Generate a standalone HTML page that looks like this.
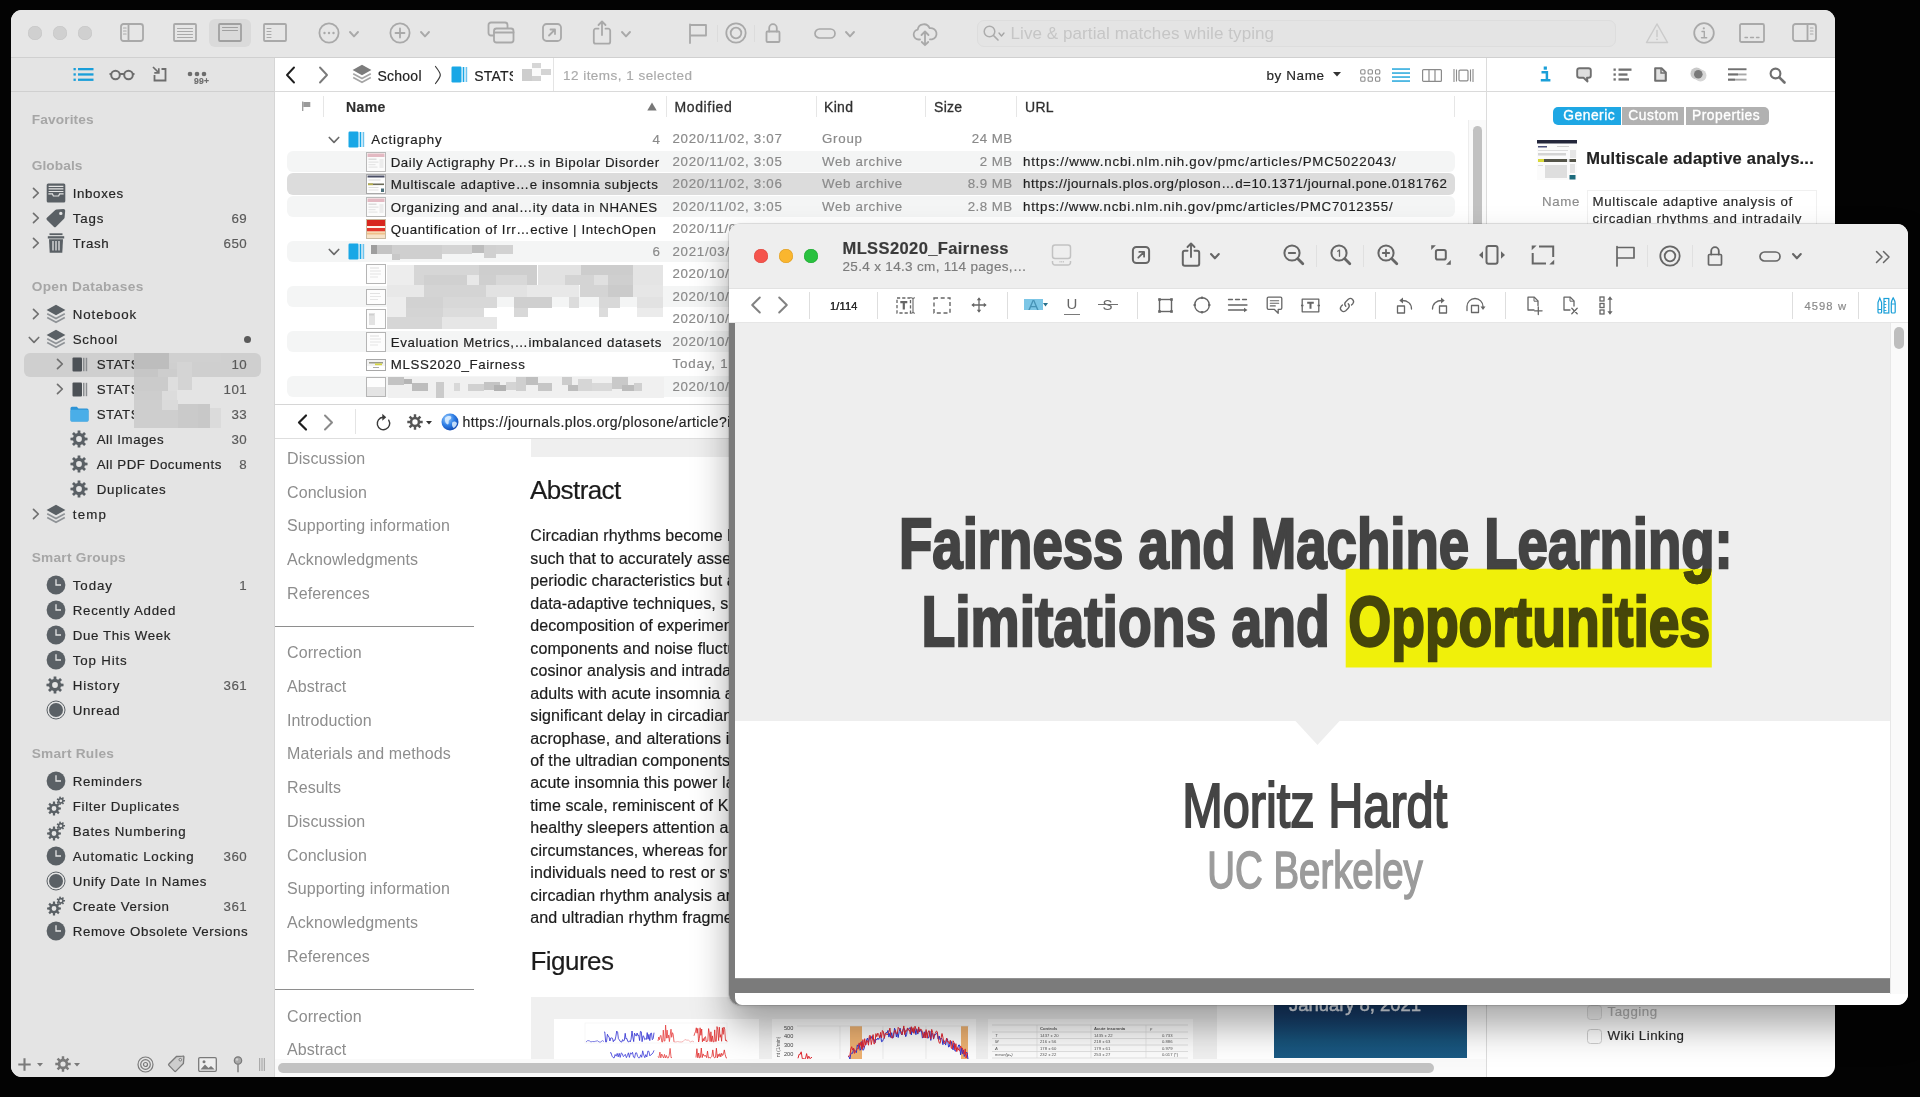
<!DOCTYPE html>
<html lang="en"><head><meta charset="utf-8"><title>DEVONthink - MLSS2020_Fairness</title>
<style>
*{box-sizing:border-box}
html,body{margin:0;padding:0}
body{width:1920px;height:1097px;background:#030303;position:relative;overflow:hidden;
 font-family:"Liberation Sans",sans-serif;font-size:13.5px;color:#262626}
div,span.t,svg{position:absolute}
svg{overflow:visible}
.t{white-space:nowrap;display:block}
#main>div,#frontin>div{will-change:transform}
.ui{font-size:13.3px;letter-spacing:.5px;color:#262626;-webkit-text-stroke:.18px}
.hd{font-size:13.7px;letter-spacing:.2px;font-weight:bold;color:#a6a6a6;-webkit-text-stroke:0}
.cnt{color:#5a5a5a}
.dim{color:#808080}
.web{font-size:16px;letter-spacing:.09px;color:#1c1c1c;-webkit-text-stroke:.2px}
.nav{font-size:16px;letter-spacing:.09px;color:#8d8d8d}
#main{left:11px;top:10px;width:1824px;height:1067px;border-radius:11px;overflow:hidden;background:#fff}
#front{left:729px;top:224px;width:1179px;height:780.5px;border-radius:11px;background:#fff;
 box-shadow:0 0 0 .5px rgba(0,0,0,.2),0 22px 36px rgba(0,0,0,.34),0 1px 4px rgba(0,0,0,.12)}
#frontin{left:0;top:0;width:1179px;height:780.5px;border-radius:11px;overflow:hidden}
</style></head>
<body>
<div id="main"><div style="left:-11px;top:-10px;width:1920px;height:1097px">
<div style="left:11px;top:10px;width:1824px;height:48px;background:#e6e6e6;border-bottom:1px solid #d0d0d0"></div>
<div style="left:27.7px;top:26.3px;width:14px;height:14px;border-radius:50%;background:#d0d0d0;box-shadow:inset 0 0 0 .5px #c6c6c6"></div>
<div style="left:52.7px;top:26.3px;width:14px;height:14px;border-radius:50%;background:#d0d0d0;box-shadow:inset 0 0 0 .5px #c6c6c6"></div>
<div style="left:77.6px;top:26.3px;width:14px;height:14px;border-radius:50%;background:#d0d0d0;box-shadow:inset 0 0 0 .5px #c6c6c6"></div>
<svg style="left:120px;top:23.1px;" width="24" height="19" viewBox="0 0 24 19"><rect x="1" y="1" width="22" height="17" rx="2.5" fill="none" stroke="#a9a9a9" stroke-width="1.8" stroke-linejoin="round" stroke-linecap="round"/><path d="M8.5 1v17" fill="none" stroke="#a9a9a9" stroke-width="1.8" stroke-linejoin="round" stroke-linecap="round"/><path d="M3.5 5h2.6M3.5 8h2.6M3.5 11h2.6" fill="none" stroke="#a9a9a9" stroke-width="1.1" stroke-linejoin="round" stroke-linecap="round"/></svg>
<svg style="left:173px;top:23.1px;" width="24" height="19" viewBox="0 0 24 19"><rect x="1" y="1" width="22" height="17" rx="1" fill="none" stroke="#a9a9a9" stroke-width="1.8" stroke-linejoin="round" stroke-linecap="round"/><path d="M4.5 5.5h15M4.5 8.5h15M4.5 11.5h15M4.5 14.5h15" fill="none" stroke="#a9a9a9" stroke-width="1.1" stroke-linejoin="round" stroke-linecap="round"/></svg>
<div style="left:209px;top:19px;width:42px;height:28px;background:#dadada;border-radius:6px"></div>
<svg style="left:218px;top:23.1px;" width="24" height="19" viewBox="0 0 24 19"><rect x="1" y="1" width="22" height="17" rx="1" fill="none" stroke="#a0a0a0" stroke-width="1.8" stroke-linejoin="round" stroke-linecap="round"/><path d="M4.5 4.5h15M4.5 7.5h15" fill="none" stroke="#a0a0a0" stroke-width="1.1" stroke-linejoin="round" stroke-linecap="round"/></svg>
<svg style="left:263px;top:23.1px;" width="24" height="19" viewBox="0 0 24 19"><rect x="1" y="1" width="22" height="17" rx="1" fill="none" stroke="#a9a9a9" stroke-width="1.8" stroke-linejoin="round" stroke-linecap="round"/><path d="M4 5.5h4M4 8.5h4M4 11.5h4M4 14.5h4" fill="none" stroke="#a9a9a9" stroke-width="1.1" stroke-linejoin="round" stroke-linecap="round"/></svg>
<svg style="left:318px;top:22.1px;" width="22" height="22" viewBox="0 0 22 22"><circle cx="11" cy="11" r="9.6" fill="none" stroke="#a9a9a9" stroke-width="1.8" stroke-linejoin="round" stroke-linecap="round"/><circle cx="6.5" cy="11" r="1.2" fill="#a9a9a9"/><circle cx="11" cy="11" r="1.2" fill="#a9a9a9"/><circle cx="15.5" cy="11" r="1.2" fill="#a9a9a9"/></svg>
<svg style="left:348.5px;top:30.8px;" width="10" height="6.4" viewBox="0 0 10 6.4"><path d="M1 1 L5 5.4 L9 1" fill="none" stroke="#a9a9a9" stroke-width="1.9" stroke-linecap="round" stroke-linejoin="round"/></svg>
<svg style="left:389px;top:22.1px;" width="22" height="22" viewBox="0 0 22 22"><circle cx="11" cy="11" r="9.6" fill="none" stroke="#a9a9a9" stroke-width="1.8" stroke-linejoin="round" stroke-linecap="round"/><path d="M6.5 11h9M11 6.5v9" fill="none" stroke="#a9a9a9" stroke-width="1.8" stroke-linejoin="round" stroke-linecap="round"/></svg>
<svg style="left:419.5px;top:30.8px;" width="10" height="6.4" viewBox="0 0 10 6.4"><path d="M1 1 L5 5.4 L9 1" fill="none" stroke="#a9a9a9" stroke-width="1.9" stroke-linecap="round" stroke-linejoin="round"/></svg>
<svg style="left:486.5px;top:21.1px;" width="28" height="23" viewBox="0 0 28 23"><rect x="1.5" y="1.5" width="19" height="13" rx="2.5" fill="none" stroke="#a9a9a9" stroke-width="1.8" stroke-linejoin="round" stroke-linecap="round"/><rect x="7" y="7.5" width="19.5" height="14" rx="2.5" fill="#e6e6e6" stroke="#a9a9a9" stroke-width="1.8" stroke-linejoin="round" stroke-linecap="round"/><path d="M7 11.5h19.5" fill="none" stroke="#a9a9a9" stroke-width="1.8" stroke-linejoin="round" stroke-linecap="round"/></svg>
<svg style="left:541.5px;top:23.1px;" width="20" height="19" viewBox="0 0 20 19"><rect x="1" y="1" width="18" height="17" rx="3.5" fill="none" stroke="#a9a9a9" stroke-width="1.8" stroke-linejoin="round" stroke-linecap="round"/><path d="M7 12.5l6-6M8.5 6.5h4.5v4.5" fill="none" stroke="#a9a9a9" stroke-width="1.8" stroke-linejoin="round" stroke-linecap="round"/></svg>
<svg style="left:590.7px;top:19.8px;" width="22" height="25" viewBox="0 0 22 25"><path d="M7.5 8.7H4.8a2 2 0 0 0-2 2v11a2 2 0 0 0 2 2h12.4a2 2 0 0 0 2-2v-11a2 2 0 0 0-2-2h-2.7" fill="none" stroke="#a9a9a9" stroke-width="1.8" stroke-linejoin="round" stroke-linecap="round"/><path d="M11 15V2M7.5 5L11 1.5 14.5 5" fill="none" stroke="#a9a9a9" stroke-width="1.8" stroke-linejoin="round" stroke-linecap="round"/></svg>
<svg style="left:620.5px;top:30.8px;" width="10" height="6.4" viewBox="0 0 10 6.4"><path d="M1 1 L5 5.4 L9 1" fill="none" stroke="#a9a9a9" stroke-width="1.9" stroke-linecap="round" stroke-linejoin="round"/></svg>
<svg style="left:688px;top:21.6px;" width="20" height="22" viewBox="0 0 20 22"><path d="M2 21V2.5M2 3h16v10.5H2" fill="none" stroke="#a9a9a9" stroke-width="1.8" stroke-linejoin="round" stroke-linecap="round"/></svg>
<div style="left:716.5px;top:25px;width:1px;height:17px;background:#dcdcdc"></div>
<svg style="left:724.5px;top:21.6px;" width="22" height="22" viewBox="0 0 22 22"><circle cx="11" cy="11" r="9.7" fill="none" stroke="#a9a9a9" stroke-width="1.8" stroke-linejoin="round" stroke-linecap="round"/><circle cx="11" cy="11" r="5.3" fill="none" stroke="#a9a9a9" stroke-width="1.8" stroke-linejoin="round" stroke-linecap="round"/></svg>
<div style="left:754px;top:25px;width:1px;height:17px;background:#dcdcdc"></div>
<svg style="left:764.5px;top:22.1px;" width="16" height="21" viewBox="0 0 16 21"><rect x="1.5" y="9.5" width="13" height="10.5" rx="1" fill="none" stroke="#a9a9a9" stroke-width="1.8" stroke-linejoin="round" stroke-linecap="round"/><path d="M4.2 9.5V6a3.8 3.8 0 0 1 7.6 0v3.5" fill="none" stroke="#a9a9a9" stroke-width="1.8" stroke-linejoin="round" stroke-linecap="round"/></svg>
<svg style="left:813.5px;top:28.1px;" width="22" height="11" viewBox="0 0 22 11"><rect x="1" y="1" width="20" height="9" rx="4.5" fill="none" stroke="#a9a9a9" stroke-width="1.7" stroke-linejoin="round" stroke-linecap="round"/></svg>
<svg style="left:845px;top:30.8px;" width="10" height="6.4" viewBox="0 0 10 6.4"><path d="M1 1 L5 5.4 L9 1" fill="none" stroke="#a9a9a9" stroke-width="1.9" stroke-linecap="round" stroke-linejoin="round"/></svg>
<svg style="left:911.5px;top:22.1px;" width="26" height="25" viewBox="0 0 26 25"><path d="M8 17.5H6.5a5 5 0 0 1-.8-9.9 6.2 6.2 0 0 1 11.9-1.4 5.7 5.7 0 0 1 2.4 11.2H18" fill="none" stroke="#a9a9a9" stroke-width="1.8" stroke-linejoin="round" stroke-linecap="round"/><path d="M13 10v13M9.5 13L13 9.5l3.5 3.5M9.8 20l3.2 3.2 3.2-3.2" fill="none" stroke="#a9a9a9" stroke-width="1.8" stroke-linejoin="round" stroke-linecap="round"/></svg>
<div style="left:977px;top:20px;width:639px;height:27px;border:1px solid #dddddd;border-radius:7px;background:#e4e4e4"></div>
<svg style="left:983px;top:25.3px;" width="16" height="16" viewBox="0 0 16 16"><circle cx="6.5" cy="6.5" r="5.3" fill="none" stroke="#acacac" stroke-width="1.5"/><path d="M10.5 10.5L15 15" fill="none" stroke="#acacac" stroke-width="1.7" stroke-linecap="round"/></svg>
<svg style="left:998px;top:32px;" width="7" height="5" viewBox="0 0 7 5"><path d="M1 1 L3.5 4 L6 1" fill="none" stroke="#a4a4a4" stroke-width="1.3" stroke-linecap="round" stroke-linejoin="round"/></svg>
<span class="t ui" style="left:1010.5px;top:23.3px;height:22px;line-height:22px;font-size:17px;color:#c6c6c6;-webkit-text-stroke:0;letter-spacing:0.08px">Live &amp; partial matches while typing</span>
<svg style="left:1644.5px;top:21.6px;" width="24" height="22" viewBox="0 0 24 22"><path d="M12 2L22.5 20.5h-21z" fill="none" stroke="#cbcbcb" stroke-width="1.5" stroke-linejoin="round" stroke-linecap="round"/><path d="M12 8.5v6" fill="none" stroke="#cbcbcb" stroke-width="1.5" stroke-linejoin="round" stroke-linecap="round"/><circle cx="12" cy="17.3" r=".9" fill="#cbcbcb"/></svg>
<svg style="left:1692.5px;top:21.6px;" width="22" height="22" viewBox="0 0 22 22"><circle cx="11" cy="11" r="9.8" fill="none" stroke="#a9a9a9" stroke-width="1.8" stroke-linejoin="round" stroke-linecap="round"/><path d="M9 9.5h2.3v6M8.5 15.7h5.2" fill="none" stroke="#a9a9a9" stroke-width="1.4" stroke-linejoin="round" stroke-linecap="round"/><circle cx="10.8" cy="6.3" r="1.1" fill="#a9a9a9"/></svg>
<svg style="left:1739px;top:22.6px;" width="26" height="20" viewBox="0 0 26 20"><rect x="1" y="1" width="24" height="18" rx="1.5" fill="none" stroke="#a9a9a9" stroke-width="1.8" stroke-linejoin="round" stroke-linecap="round"/><path d="M6 14.5h2.5M11.5 14.5h3M17.5 14.5h2.5" fill="none" stroke="#a9a9a9" stroke-width="1.3" stroke-linejoin="round" stroke-linecap="round"/></svg>
<svg style="left:1791.5px;top:23.1px;" width="25" height="19" viewBox="0 0 25 19"><rect x="1" y="1" width="23" height="17" rx="2.5" fill="none" stroke="#a9a9a9" stroke-width="1.8" stroke-linejoin="round" stroke-linecap="round"/><path d="M15.5 1v17" fill="none" stroke="#a9a9a9" stroke-width="1.8" stroke-linejoin="round" stroke-linecap="round"/><path d="M18.4 5h2.6M18.4 8h2.6M18.4 11h2.6" fill="none" stroke="#a9a9a9" stroke-width="1.1" stroke-linejoin="round" stroke-linecap="round"/></svg>
<div style="left:11px;top:58px;width:263px;height:1020px;background:#e4e4e4"></div>
<div style="left:274px;top:58px;width:0.8px;height:1020px;background:#d6d6d6"></div>
<div style="left:11px;top:91px;width:263px;height:1px;background:#d0d0d0"></div>
<svg style="left:73px;top:67px;" width="21" height="15" viewBox="0 0 21 15"><rect x=".500" y="1" width="2.3" height="2.3" fill="#199ed9"/><rect x="5" y="1" width="15.5" height="2.3" fill="#199ed9"/><rect x=".500" y="6.3" width="2.3" height="2.3" fill="#199ed9"/><rect x="5" y="6.3" width="15.5" height="2.3" fill="#199ed9"/><rect x=".500" y="11.6" width="2.3" height="2.3" fill="#199ed9"/><rect x="5" y="11.6" width="15.5" height="2.3" fill="#199ed9"/></svg>
<svg style="left:109px;top:68.5px;" width="26" height="12" viewBox="0 0 26 12"><circle cx="6.5" cy="6" r="4.3" fill="none" stroke="#6d6d6d" stroke-width="2"/><circle cx="19.5" cy="6" r="4.3" fill="none" stroke="#6d6d6d" stroke-width="2"/><path d="M10.5 5h5M.500 5h2M23.5 5h2" stroke="#6d6d6d" stroke-width="1.8"/></svg>
<svg style="left:152px;top:65.5px;" width="16" height="16" viewBox="0 0 16 16"><path d="M2.5 9v5.5h11V3H9.5" fill="none" stroke="#6d6d6d" stroke-width="1.8"/><path d="M1 1l5.5 5.5M6.8 2.3v4.5H2.3" fill="none" stroke="#6d6d6d" stroke-width="1.7"/></svg>
<svg style="left:187px;top:70.5px;" width="20" height="6" viewBox="0 0 20 6"><circle cx="3" cy="3" r="2.3" fill="#6d6d6d"/><circle cx="10" cy="3" r="2.3" fill="#6d6d6d"/><circle cx="17" cy="3" r="2.3" fill="#6d6d6d"/></svg>
<span class="t ui" style="left:194px;top:76px;height:10px;line-height:10px;font-size:8.5px;font-weight:bold;color:#6d6d6d;letter-spacing:.3px">99+</span>
<span class="t hd" style="left:31.7px;top:110.5px;height:18px;line-height:18px;;letter-spacing:0.14px">Favorites</span>
<span class="t hd" style="left:31.7px;top:157px;height:18px;line-height:18px;;letter-spacing:0.1px">Globals</span>
<span class="t hd" style="left:31.7px;top:278px;height:18px;line-height:18px;;letter-spacing:0.33px">Open Databases</span>
<span class="t hd" style="left:31.7px;top:549px;height:18px;line-height:18px;;letter-spacing:0.25px">Smart Groups</span>
<span class="t hd" style="left:31.7px;top:745px;height:18px;line-height:18px;;letter-spacing:0.24px">Smart Rules</span>
<svg style="left:31.5px;top:187px;" width="8" height="12" viewBox="0 0 8 12"><path d="M1.5 1.3L6.3 6 1.5 10.7" fill="none" stroke="#707070" stroke-width="1.7" stroke-linecap="round" stroke-linejoin="round"/></svg>
<svg style="left:45.5px;top:183.2px;" width="20" height="20" viewBox="0 0 20 20"><rect x=".700" y=".500" width="18.6" height="19" rx="1.5" fill="#5a6065"/><path d="M2.6 3.3h14.8M2.6 5.9h14.8M2.6 8.5h14.8" stroke="#e4e4e4" stroke-width="1.2"/><path d="M2.4 10.2h4.4l1 2.2h4.4l1-2.2h4.4v1.2h-3.6l-1 2.2H7l-1-2.2H2.4z" fill="#e4e4e4"/></svg>
<span class="t ui" style="left:72.7px;top:184.5px;height:18px;line-height:18px;;letter-spacing:0.65px">Inboxes</span>
<svg style="left:31.5px;top:212px;" width="8" height="12" viewBox="0 0 8 12"><path d="M1.5 1.3L6.3 6 1.5 10.7" fill="none" stroke="#707070" stroke-width="1.7" stroke-linecap="round" stroke-linejoin="round"/></svg>
<svg style="left:45.5px;top:208.2px;" width="20" height="20" viewBox="0 0 20 20"><path fill-rule="evenodd" d="M10.5 1.5L17.3 .900a1.8 1.8 0 0 1 1.9 1.9l-.6 6.8a2 2 0 0 1-.6 1.2l-8 8a1.6 1.6 0 0 1-2.2 0L.900 11.9a1.6 1.6 0 0 1 0-2.2l8.4-7.6a2 2 0 0 1 1.2-.600zM14.8 3.7a1.7 1.7 0 1 0 .01 3.4 1.7 1.7 0 0 0-.01-3.4z" fill="#5a6065"/></svg>
<span class="t ui" style="left:72.7px;top:209.5px;height:18px;line-height:18px;;letter-spacing:0.84px">Tags</span>
<span class="t ui cnt" style="right:1672.8px;text-align:right;top:209.5px;height:18px;line-height:18px;">69</span>
<svg style="left:31.5px;top:237px;" width="8" height="12" viewBox="0 0 8 12"><path d="M1.5 1.3L6.3 6 1.5 10.7" fill="none" stroke="#707070" stroke-width="1.7" stroke-linecap="round" stroke-linejoin="round"/></svg>
<svg style="left:46.5px;top:233.2px;" width="18" height="20" viewBox="0 0 18 20"><rect x="2.5" y=".300" width="13" height="1.8" fill="#5a6065"/><rect x=".800" y="3.2" width="16.4" height="2.3" fill="#5a6065"/><path d="M2 6.2h14l-.7 13.5H2.7z" fill="#5a6065"/><path d="M6 8v9.5M9 8v9.5M12 8v9.5" stroke="#e4e4e4" stroke-width="1.3"/></svg>
<span class="t ui" style="left:72.7px;top:234.5px;height:18px;line-height:18px;;letter-spacing:0.62px">Trash</span>
<span class="t ui cnt" style="right:1672.8px;text-align:right;top:234.5px;height:18px;line-height:18px;">650</span>
<svg style="left:31.5px;top:308px;" width="8" height="12" viewBox="0 0 8 12"><path d="M1.5 1.3L6.3 6 1.5 10.7" fill="none" stroke="#707070" stroke-width="1.7" stroke-linecap="round" stroke-linejoin="round"/></svg>
<svg style="left:45.5px;top:304.2px;" width="20" height="20" viewBox="0 0 20 20"><path d="M10 .800L19.4 6 10 11.2 .600 6z" fill="#5a6065"/><path d="M1.2 9.7L10 14.5l8.8-4.8M1.2 13.4L10 18.2l8.8-4.8" fill="none" stroke="#8f9397" stroke-width="1.7"/></svg>
<span class="t ui" style="left:72.7px;top:305.5px;height:18px;line-height:18px;;letter-spacing:0.95px">Notebook</span>
<svg style="left:28px;top:335.5px;" width="12" height="8" viewBox="0 0 12 8"><path d="M1.3 1.5L6 6.3 10.7 1.5" fill="none" stroke="#707070" stroke-width="1.7" stroke-linecap="round" stroke-linejoin="round"/></svg>
<svg style="left:45.5px;top:329.2px;" width="20" height="20" viewBox="0 0 20 20"><path d="M10 .800L19.4 6 10 11.2 .600 6z" fill="#5a6065"/><path d="M1.2 9.7L10 14.5l8.8-4.8M1.2 13.4L10 18.2l8.8-4.8" fill="none" stroke="#8f9397" stroke-width="1.7"/></svg>
<span class="t ui" style="left:72.7px;top:330.5px;height:18px;line-height:18px;;letter-spacing:0.79px">School</span>
<div style="left:243.7px;top:336px;width:7px;height:7px;border-radius:50%;background:#5a5a5a"></div>
<div style="left:24px;top:352.5px;width:237px;height:24px;background:#cfcfcf;border-radius:6px"></div>
<svg style="left:55.5px;top:358px;" width="8" height="12" viewBox="0 0 8 12"><path d="M1.5 1.3L6.3 6 1.5 10.7" fill="none" stroke="#707070" stroke-width="1.7" stroke-linecap="round" stroke-linejoin="round"/></svg>
<svg style="left:71.5px;top:356.7px;" width="16" height="15" viewBox="0 0 16 15"><rect x=".500" y=".500" width="9.5" height="14" rx="1" fill="#4c5156"/><rect x="11" y=".800" width="1.5" height="13.4" fill="#8a8d90"/><rect x="13.7" y=".800" width="1.5" height="13.4" fill="#8a8d90"/></svg>
<span class="t ui" style="left:96.7px;top:355.5px;height:18px;line-height:18px;">STATS</span>
<span class="t ui cnt" style="right:1672.8px;text-align:right;top:355.5px;height:18px;line-height:18px;">10</span>
<svg style="left:55.5px;top:383px;" width="8" height="12" viewBox="0 0 8 12"><path d="M1.5 1.3L6.3 6 1.5 10.7" fill="none" stroke="#707070" stroke-width="1.7" stroke-linecap="round" stroke-linejoin="round"/></svg>
<svg style="left:71.5px;top:381.7px;" width="16" height="15" viewBox="0 0 16 15"><rect x=".500" y=".500" width="9.5" height="14" rx="1" fill="#4c5156"/><rect x="11" y=".800" width="1.5" height="13.4" fill="#8a8d90"/><rect x="13.7" y=".800" width="1.5" height="13.4" fill="#8a8d90"/></svg>
<span class="t ui" style="left:96.7px;top:380.5px;height:18px;line-height:18px;">STATS</span>
<span class="t ui cnt" style="right:1672.8px;text-align:right;top:380.5px;height:18px;line-height:18px;">101</span>
<svg style="left:70px;top:406.2px;" width="19" height="16" viewBox="0 0 19 16"><path d="M.500 2.2A1.5 1.5 0 0 1 2 .700h4.8l1.7 1.8h8.5A1.5 1.5 0 0 1 18.5 4v10a1.5 1.5 0 0 1-1.5 1.5H2A1.5 1.5 0 0 1 .500 14z" fill="#2d94d6"/><rect x=".500" y="3.7" width="18" height="11.8" rx="1.5" fill="#4aaee8"/></svg>
<span class="t ui" style="left:96.7px;top:405.5px;height:18px;line-height:18px;">STATS</span>
<span class="t ui cnt" style="right:1672.8px;text-align:right;top:405.5px;height:18px;line-height:18px;">33</span>
<svg style="left:68.8px;top:429.2px;" width="20" height="20" viewBox="0 0 20 20"><path fill-rule="evenodd" fill="#5a6065" d="M15.97 8.57 L18.54 8.65 L18.54 11.35 L15.97 11.43 L15.23 13.21 L17 15.08 L15.08 17 L13.21 15.23 L11.43 15.97 L11.35 18.54 L8.65 18.54 L8.57 15.97 L6.79 15.23 L4.92 17 L3 15.08 L4.77 13.21 L4.03 11.43 L1.46 11.35 L1.46 8.65 L4.03 8.57 L4.77 6.79 L3 4.92 L4.92 3 L6.79 4.77 L8.57 4.03 L8.65 1.46 L11.35 1.46 L11.43 4.03 L13.21 4.77 L15.08 3 L17 4.92 L15.23 6.79Z M12.88 10 A2.88 2.88 0 1 0 7.12 10 A2.88 2.88 0 1 0 12.88 10Z"/></svg>
<span class="t ui" style="left:96.7px;top:430.5px;height:18px;line-height:18px;;letter-spacing:0.55px">All Images</span>
<span class="t ui cnt" style="right:1672.8px;text-align:right;top:430.5px;height:18px;line-height:18px;">30</span>
<svg style="left:68.8px;top:454.2px;" width="20" height="20" viewBox="0 0 20 20"><path fill-rule="evenodd" fill="#5a6065" d="M15.97 8.57 L18.54 8.65 L18.54 11.35 L15.97 11.43 L15.23 13.21 L17 15.08 L15.08 17 L13.21 15.23 L11.43 15.97 L11.35 18.54 L8.65 18.54 L8.57 15.97 L6.79 15.23 L4.92 17 L3 15.08 L4.77 13.21 L4.03 11.43 L1.46 11.35 L1.46 8.65 L4.03 8.57 L4.77 6.79 L3 4.92 L4.92 3 L6.79 4.77 L8.57 4.03 L8.65 1.46 L11.35 1.46 L11.43 4.03 L13.21 4.77 L15.08 3 L17 4.92 L15.23 6.79Z M12.88 10 A2.88 2.88 0 1 0 7.12 10 A2.88 2.88 0 1 0 12.88 10Z"/></svg>
<span class="t ui" style="left:96.7px;top:455.5px;height:18px;line-height:18px;;letter-spacing:0.54px">All PDF Documents</span>
<span class="t ui cnt" style="right:1672.8px;text-align:right;top:455.5px;height:18px;line-height:18px;">8</span>
<svg style="left:68.8px;top:479.2px;" width="20" height="20" viewBox="0 0 20 20"><path fill-rule="evenodd" fill="#5a6065" d="M15.97 8.57 L18.54 8.65 L18.54 11.35 L15.97 11.43 L15.23 13.21 L17 15.08 L15.08 17 L13.21 15.23 L11.43 15.97 L11.35 18.54 L8.65 18.54 L8.57 15.97 L6.79 15.23 L4.92 17 L3 15.08 L4.77 13.21 L4.03 11.43 L1.46 11.35 L1.46 8.65 L4.03 8.57 L4.77 6.79 L3 4.92 L4.92 3 L6.79 4.77 L8.57 4.03 L8.65 1.46 L11.35 1.46 L11.43 4.03 L13.21 4.77 L15.08 3 L17 4.92 L15.23 6.79Z M12.88 10 A2.88 2.88 0 1 0 7.12 10 A2.88 2.88 0 1 0 12.88 10Z"/></svg>
<span class="t ui" style="left:96.7px;top:480.5px;height:18px;line-height:18px;;letter-spacing:0.77px">Duplicates</span>
<svg style="left:31.5px;top:508px;" width="8" height="12" viewBox="0 0 8 12"><path d="M1.5 1.3L6.3 6 1.5 10.7" fill="none" stroke="#707070" stroke-width="1.7" stroke-linecap="round" stroke-linejoin="round"/></svg>
<svg style="left:45.5px;top:504.2px;" width="20" height="20" viewBox="0 0 20 20"><path d="M10 .800L19.4 6 10 11.2 .600 6z" fill="#5a6065"/><path d="M1.2 9.7L10 14.5l8.8-4.8M1.2 13.4L10 18.2l8.8-4.8" fill="none" stroke="#8f9397" stroke-width="1.7"/></svg>
<span class="t ui" style="left:72.7px;top:505.5px;height:18px;line-height:18px;;letter-spacing:1.25px">temp</span>
<div style="left:133.5px;top:353px;width:35px;height:16px;background:#bdbdbd"></div>
<div style="left:168.5px;top:353px;width:52px;height:10px;background:#d0d0d0"></div>
<div style="left:133.5px;top:369px;width:24px;height:8px;background:#c6c6c6"></div>
<div style="left:157.5px;top:369px;width:34px;height:8px;background:#cdcdcd"></div>
<div style="left:177px;top:362px;width:15px;height:28px;background:#d4d4d4"></div>
<div style="left:192px;top:362px;width:28px;height:15px;background:#cfcfcf"></div>
<div style="left:133.5px;top:377px;width:34px;height:14px;background:#cbcbcb"></div>
<div style="left:133.5px;top:391px;width:28px;height:9px;background:#cdcdcd"></div>
<div style="left:161.5px;top:391px;width:16px;height:9px;background:#dcdcdc"></div>
<div style="left:167.5px;top:377px;width:10px;height:14px;background:#dedede"></div>
<div style="left:192px;top:377px;width:28px;height:23px;background:#e4e4e4"></div>
<div style="left:177px;top:390px;width:15px;height:10px;background:#e4e4e4"></div>
<div style="left:133.5px;top:400px;width:44px;height:28px;background:#cecece"></div>
<div style="left:177.5px;top:404px;width:20px;height:24px;background:#cacaca"></div>
<div style="left:197.5px;top:404px;width:12px;height:24px;background:#c8c8c8"></div>
<div style="left:209.5px;top:408px;width:11px;height:20px;background:#dbdbdb"></div>
<div style="left:162px;top:400px;width:15.5px;height:10px;background:#dadada"></div>
<svg style="left:45.5px;top:575.2px;" width="20" height="20" viewBox="0 0 20 20"><circle cx="10" cy="10" r="9.4" fill="#5a6065"/><path d="M10 4.3V10h5" fill="none" stroke="#e4e4e4" stroke-width="1.3"/></svg>
<span class="t ui" style="left:72.7px;top:576.5px;height:18px;line-height:18px;;letter-spacing:0.95px">Today</span>
<span class="t ui cnt" style="right:1672.8px;text-align:right;top:576.5px;height:18px;line-height:18px;">1</span>
<svg style="left:45.5px;top:600.2px;" width="20" height="20" viewBox="0 0 20 20"><circle cx="10" cy="10" r="9.4" fill="#5a6065"/><path d="M10 4.3V10h5" fill="none" stroke="#e4e4e4" stroke-width="1.3"/></svg>
<span class="t ui" style="left:72.7px;top:601.5px;height:18px;line-height:18px;;letter-spacing:0.73px">Recently Added</span>
<svg style="left:45.5px;top:625.2px;" width="20" height="20" viewBox="0 0 20 20"><circle cx="10" cy="10" r="9.4" fill="#5a6065"/><path d="M10 4.3V10h5" fill="none" stroke="#e4e4e4" stroke-width="1.3"/></svg>
<span class="t ui" style="left:72.7px;top:626.5px;height:18px;line-height:18px;;letter-spacing:0.6px">Due This Week</span>
<svg style="left:45.5px;top:650.2px;" width="20" height="20" viewBox="0 0 20 20"><circle cx="10" cy="10" r="9.4" fill="#5a6065"/><path d="M10 4.3V10h5" fill="none" stroke="#e4e4e4" stroke-width="1.3"/></svg>
<span class="t ui" style="left:72.7px;top:651.5px;height:18px;line-height:18px;;letter-spacing:0.85px">Top Hits</span>
<svg style="left:44.8px;top:675.2px;" width="20" height="20" viewBox="0 0 20 20"><path fill-rule="evenodd" fill="#5a6065" d="M15.97 8.57 L18.54 8.65 L18.54 11.35 L15.97 11.43 L15.23 13.21 L17 15.08 L15.08 17 L13.21 15.23 L11.43 15.97 L11.35 18.54 L8.65 18.54 L8.57 15.97 L6.79 15.23 L4.92 17 L3 15.08 L4.77 13.21 L4.03 11.43 L1.46 11.35 L1.46 8.65 L4.03 8.57 L4.77 6.79 L3 4.92 L4.92 3 L6.79 4.77 L8.57 4.03 L8.65 1.46 L11.35 1.46 L11.43 4.03 L13.21 4.77 L15.08 3 L17 4.92 L15.23 6.79Z M12.88 10 A2.88 2.88 0 1 0 7.12 10 A2.88 2.88 0 1 0 12.88 10Z"/></svg>
<span class="t ui" style="left:72.7px;top:676.5px;height:18px;line-height:18px;;letter-spacing:0.87px">History</span>
<span class="t ui cnt" style="right:1672.8px;text-align:right;top:676.5px;height:18px;line-height:18px;">361</span>
<svg style="left:45.5px;top:700.2px;" width="20" height="20" viewBox="0 0 20 20"><circle cx="10" cy="10" r="9" fill="none" stroke="#5a6065" stroke-width="1"/><circle cx="10" cy="10" r="7" fill="#5a6065"/></svg>
<span class="t ui" style="left:72.7px;top:701.5px;height:18px;line-height:18px;;letter-spacing:0.68px">Unread</span>
<svg style="left:45.5px;top:771.2px;" width="20" height="20" viewBox="0 0 20 20"><circle cx="10" cy="10" r="9.4" fill="#5a6065"/><path d="M10 4.3V10h5" fill="none" stroke="#e4e4e4" stroke-width="1.3"/></svg>
<span class="t ui" style="left:72.7px;top:772.5px;height:18px;line-height:18px;;letter-spacing:0.63px">Reminders</span>
<svg style="left:45.5px;top:796.2px;" width="20" height="20" viewBox="0 0 20 20"><path fill-rule="evenodd" fill="#5a6065" d="M12.76 11.36 L14.91 11.4 L14.91 13.6 L12.76 13.64 L12.18 15.06 L13.66 16.61 L12.11 18.16 L10.56 16.68 L9.14 17.26 L9.1 19.41 L6.9 19.41 L6.86 17.26 L5.44 16.68 L3.89 18.16 L2.34 16.61 L3.82 15.06 L3.24 13.64 L1.09 13.6 L1.09 11.4 L3.24 11.36 L3.82 9.94 L2.34 8.39 L3.89 6.84 L5.44 8.32 L6.86 7.74 L6.9 5.59 L9.1 5.59 L9.14 7.74 L10.56 8.32 L12.11 6.84 L13.66 8.39 L12.18 9.94Z M10.4 12.5 A2.4 2.4 0 1 0 5.6 12.5 A2.4 2.4 0 1 0 10.4 12.5Z"/><path fill-rule="evenodd" fill="#5a6065" d="M17.69 4 L19.03 4.03 L19.03 5.57 L17.69 5.6 L17.23 6.56 L18.04 7.63 L16.84 8.59 L15.98 7.56 L14.93 7.8 L14.61 9.1 L13.11 8.75 L13.38 7.44 L12.54 6.77 L11.32 7.33 L10.65 5.94 L11.85 5.34 L11.85 4.26 L10.65 3.66 L11.32 2.27 L12.54 2.83 L13.38 2.16 L13.11 0.85 L14.61 0.5 L14.93 1.8 L15.98 2.04 L16.84 1.01 L18.04 1.97 L17.23 3.04Z M16.2 4.8 A1.4 1.4 0 1 0 13.4 4.8 A1.4 1.4 0 1 0 16.2 4.8Z"/></svg>
<span class="t ui" style="left:72.7px;top:797.5px;height:18px;line-height:18px;;letter-spacing:0.69px">Filter Duplicates</span>
<svg style="left:45.5px;top:821.2px;" width="20" height="20" viewBox="0 0 20 20"><path fill-rule="evenodd" fill="#5a6065" d="M12.76 11.36 L14.91 11.4 L14.91 13.6 L12.76 13.64 L12.18 15.06 L13.66 16.61 L12.11 18.16 L10.56 16.68 L9.14 17.26 L9.1 19.41 L6.9 19.41 L6.86 17.26 L5.44 16.68 L3.89 18.16 L2.34 16.61 L3.82 15.06 L3.24 13.64 L1.09 13.6 L1.09 11.4 L3.24 11.36 L3.82 9.94 L2.34 8.39 L3.89 6.84 L5.44 8.32 L6.86 7.74 L6.9 5.59 L9.1 5.59 L9.14 7.74 L10.56 8.32 L12.11 6.84 L13.66 8.39 L12.18 9.94Z M10.4 12.5 A2.4 2.4 0 1 0 5.6 12.5 A2.4 2.4 0 1 0 10.4 12.5Z"/><path fill-rule="evenodd" fill="#5a6065" d="M17.69 4 L19.03 4.03 L19.03 5.57 L17.69 5.6 L17.23 6.56 L18.04 7.63 L16.84 8.59 L15.98 7.56 L14.93 7.8 L14.61 9.1 L13.11 8.75 L13.38 7.44 L12.54 6.77 L11.32 7.33 L10.65 5.94 L11.85 5.34 L11.85 4.26 L10.65 3.66 L11.32 2.27 L12.54 2.83 L13.38 2.16 L13.11 0.85 L14.61 0.5 L14.93 1.8 L15.98 2.04 L16.84 1.01 L18.04 1.97 L17.23 3.04Z M16.2 4.8 A1.4 1.4 0 1 0 13.4 4.8 A1.4 1.4 0 1 0 16.2 4.8Z"/></svg>
<span class="t ui" style="left:72.7px;top:822.5px;height:18px;line-height:18px;;letter-spacing:0.73px">Bates Numbering</span>
<svg style="left:45.5px;top:846.2px;" width="20" height="20" viewBox="0 0 20 20"><circle cx="10" cy="10" r="9.4" fill="#5a6065"/><path d="M10 4.3V10h5" fill="none" stroke="#e4e4e4" stroke-width="1.3"/></svg>
<span class="t ui" style="left:72.7px;top:847.5px;height:18px;line-height:18px;;letter-spacing:0.77px">Automatic Locking</span>
<span class="t ui cnt" style="right:1672.8px;text-align:right;top:847.5px;height:18px;line-height:18px;">360</span>
<svg style="left:45.5px;top:871.2px;" width="20" height="20" viewBox="0 0 20 20"><circle cx="10" cy="10" r="9" fill="none" stroke="#5a6065" stroke-width="1"/><circle cx="10" cy="10" r="7" fill="#5a6065"/></svg>
<span class="t ui" style="left:72.7px;top:872.5px;height:18px;line-height:18px;;letter-spacing:0.61px">Unify Date In Names</span>
<svg style="left:45.5px;top:896.2px;" width="20" height="20" viewBox="0 0 20 20"><path fill-rule="evenodd" fill="#5a6065" d="M12.76 11.36 L14.91 11.4 L14.91 13.6 L12.76 13.64 L12.18 15.06 L13.66 16.61 L12.11 18.16 L10.56 16.68 L9.14 17.26 L9.1 19.41 L6.9 19.41 L6.86 17.26 L5.44 16.68 L3.89 18.16 L2.34 16.61 L3.82 15.06 L3.24 13.64 L1.09 13.6 L1.09 11.4 L3.24 11.36 L3.82 9.94 L2.34 8.39 L3.89 6.84 L5.44 8.32 L6.86 7.74 L6.9 5.59 L9.1 5.59 L9.14 7.74 L10.56 8.32 L12.11 6.84 L13.66 8.39 L12.18 9.94Z M10.4 12.5 A2.4 2.4 0 1 0 5.6 12.5 A2.4 2.4 0 1 0 10.4 12.5Z"/><path fill-rule="evenodd" fill="#5a6065" d="M17.69 4 L19.03 4.03 L19.03 5.57 L17.69 5.6 L17.23 6.56 L18.04 7.63 L16.84 8.59 L15.98 7.56 L14.93 7.8 L14.61 9.1 L13.11 8.75 L13.38 7.44 L12.54 6.77 L11.32 7.33 L10.65 5.94 L11.85 5.34 L11.85 4.26 L10.65 3.66 L11.32 2.27 L12.54 2.83 L13.38 2.16 L13.11 0.85 L14.61 0.5 L14.93 1.8 L15.98 2.04 L16.84 1.01 L18.04 1.97 L17.23 3.04Z M16.2 4.8 A1.4 1.4 0 1 0 13.4 4.8 A1.4 1.4 0 1 0 16.2 4.8Z"/></svg>
<span class="t ui" style="left:72.7px;top:897.5px;height:18px;line-height:18px;;letter-spacing:0.64px">Create Version</span>
<span class="t ui cnt" style="right:1672.8px;text-align:right;top:897.5px;height:18px;line-height:18px;">361</span>
<svg style="left:45.5px;top:921.2px;" width="20" height="20" viewBox="0 0 20 20"><circle cx="10" cy="10" r="9.4" fill="#5a6065"/><path d="M10 4.3V10h5" fill="none" stroke="#e4e4e4" stroke-width="1.3"/></svg>
<span class="t ui" style="left:72.7px;top:922.5px;height:18px;line-height:18px;;letter-spacing:0.6px">Remove Obsolete Versions</span>
<svg style="left:18px;top:1057.5px;" width="13" height="13" viewBox="0 0 13 13"><path d="M6.5 .300v12.4M.300 6.5h12.4" stroke="#7a7a7a" stroke-width="2.1"/></svg>
<svg style="left:36.5px;top:1063px;" width="6" height="4" viewBox="0 0 6 4"><path d="M0 0h6L3 3.5z" fill="#7a7a7a"/></svg>
<svg style="left:54.5px;top:1056px;" width="16" height="16" viewBox="0 0 16 16"><path fill-rule="evenodd" fill="#7a7a7a" d="M13.15 6.76 L15.7 6.78 L15.7 9.22 L13.15 9.24 L12.52 10.77 L14.31 12.58 L12.58 14.31 L10.77 12.52 L9.24 13.15 L9.22 15.7 L6.78 15.7 L6.76 13.15 L5.23 12.52 L3.42 14.31 L1.69 12.58 L3.48 10.77 L2.85 9.24 L0.3 9.22 L0.3 6.78 L2.85 6.76 L3.48 5.23 L1.69 3.42 L3.42 1.69 L5.23 3.48 L6.76 2.85 L6.78 0.3 L9.22 0.3 L9.24 2.85 L10.77 3.48 L12.58 1.69 L14.31 3.42 L12.52 5.23Z M10.6 8 A2.6 2.6 0 1 0 5.4 8 A2.6 2.6 0 1 0 10.6 8Z"/></svg>
<svg style="left:74px;top:1063px;" width="6" height="4" viewBox="0 0 6 4"><path d="M0 0h6L3 3.5z" fill="#7a7a7a"/></svg>
<svg style="left:136.5px;top:1055.5px;" width="17" height="17" viewBox="0 0 17 17"><circle cx="8.5" cy="8.5" r="7.5" fill="none" stroke="#7a7a7a" stroke-width="1.2"/><circle cx="8.5" cy="8.5" r="4.8" fill="none" stroke="#7a7a7a" stroke-width="1.2"/><circle cx="8.5" cy="8.5" r="2" fill="none" stroke="#7a7a7a" stroke-width="1.2"/></svg>
<svg style="left:166.5px;top:1055px;" width="18" height="18" viewBox="0 0 18 18"><path d="M9.5 1.5l6.3-.5a1 1 0 0 1 1.1 1.1l-.5 6.3-7.5 7.7a1 1 0 0 1-1.4 0L1.9 10.4a1 1 0 0 1 0-1.4z" fill="#cdcdcd" stroke="#7a7a7a" stroke-width="1.3"/><circle cx="13.3" cy="4.7" r="1.3" fill="#e4e4e4" stroke="#7a7a7a" stroke-width="1"/></svg>
<svg style="left:197.5px;top:1056.5px;" width="19" height="15" viewBox="0 0 19 15"><rect x=".700" y=".700" width="17.6" height="13.6" rx="1.2" fill="#eeeeee" stroke="#7a7a7a" stroke-width="1.3"/><path d="M2.5 12.5l4.5-5 3.5 3.5 2.5-2 3.7 3.5z" fill="#7a7a7a"/><circle cx="6" cy="4.7" r="1.5" fill="#7a7a7a"/></svg>
<svg style="left:233px;top:1056px;" width="10" height="17" viewBox="0 0 10 17"><circle cx="5" cy="4.5" r="3.7" fill="#a9a9a9" stroke="#7a7a7a" stroke-width="1.2"/><circle cx="4" cy="3.5" r="1.2" fill="#d0d0d0"/><path d="M5 8.2v8" stroke="#7a7a7a" stroke-width="1.4"/></svg>
<svg style="left:258.5px;top:1058px;" width="6" height="13" viewBox="0 0 6 13"><path d="M.700 0v13M3 0v13M5.3 0v13" stroke="#8a8a8a" stroke-width=".800"/></svg>
<div style="left:275px;top:91px;width:1211.5px;height:1px;background:#dadada"></div>
<svg style="left:284.5px;top:65.5px;" width="11" height="18" viewBox="0 0 11 18"><path d="M9 1.5L2 9l7 7.5" fill="none" stroke="#1e1e1e" stroke-width="1.9" stroke-linecap="round" stroke-linejoin="round"/></svg>
<svg style="left:318px;top:65.5px;" width="11" height="18" viewBox="0 0 11 18"><path d="M2 1.5L9 9l-7 7.5" fill="none" stroke="#7a7a7a" stroke-width="1.9" stroke-linecap="round" stroke-linejoin="round"/></svg>
<svg style="left:352px;top:64px;" width="20" height="20" viewBox="0 0 20 20"><path d="M10 .800L19.4 6 10 11.2 .600 6z" fill="#7c7c7c"/><path d="M1.2 9.7L10 14.5l8.8-4.8M1.2 13.4L10 18.2l8.8-4.8" fill="none" stroke="#a6a6a6" stroke-width="1.7"/></svg>
<span class="t ui" style="left:377.5px;top:67px;height:18px;line-height:18px;font-size:14px;color:#222;letter-spacing:0.24px">School</span>
<svg style="left:433.5px;top:65px;" width="8" height="20" viewBox="0 0 8 20"><path d="M1.5 1.5C5 6 6.3 8 6.3 10S5 14 1.5 18.5" fill="none" stroke="#3a3a3a" stroke-width="1.2" stroke-linecap="round"/></svg>
<svg style="left:451px;top:65.5px;" width="17" height="17" viewBox="0 0 17 17"><rect x=".500" y=".500" width="10" height="16" rx="1.2" fill="#19a7e6"/><rect x="11.7" y="1" width="1.6" height="15" fill="#19a7e6"/><rect x="14.6" y="1" width="1.6" height="15" fill="#6cc3ee"/></svg>
<span class="t ui" style="left:474.3px;width:38.5px;overflow:hidden;top:67px;height:18px;line-height:18px;font-size:14px;letter-spacing:.2px;color:#222">STATS</span>
<div style="left:522.1px;top:69.3px;width:10.2px;height:11.8px;background:#cdcdcd"></div>
<div style="left:532.3px;top:63.3px;width:9px;height:4.7px;background:#d6d6d6"></div>
<div style="left:532.3px;top:68px;width:9px;height:7.5px;background:#fafafa"></div>
<div style="left:541.3px;top:69.3px;width:9.3px;height:6.2px;background:#d4d4d4"></div>
<div style="left:532.3px;top:75.5px;width:9px;height:5.6px;background:#d2d2d2"></div>
<div style="left:553px;top:58px;width:1px;height:33px;background:#e4e4e4"></div>
<span class="t ui" style="left:563px;top:66.7px;height:18px;line-height:18px;color:#aaaaaa;font-size:13.5px;letter-spacing:0.47px">12 items, 1 selected</span>
<span class="t ui" style="left:1266.5px;top:66.7px;height:18px;line-height:18px;color:#262626;font-size:13.5px;letter-spacing:0.58px">by Name</span>
<svg style="left:1333px;top:72px;" width="8" height="5" viewBox="0 0 8 5"><path d="M0 0h8L4 4.5z" fill="#333"/></svg>
<svg style="left:1359.75px;top:68.5px;" width="20.5" height="13" viewBox="0 0 20.5 13"><rect x="0.7" y="0.7" width="4.3" height="4.3" rx="1" fill="none" stroke="#8a8a8a" stroke-width="1.1"/><rect x="0.7" y="8" width="4.3" height="4.3" rx="1" fill="none" stroke="#8a8a8a" stroke-width="1.1"/><rect x="8.1" y="0.7" width="4.3" height="4.3" rx="1" fill="none" stroke="#8a8a8a" stroke-width="1.1"/><rect x="8.1" y="8" width="4.3" height="4.3" rx="1" fill="none" stroke="#8a8a8a" stroke-width="1.1"/><rect x="15.5" y="0.7" width="4.3" height="4.3" rx="1" fill="none" stroke="#8a8a8a" stroke-width="1.1"/><rect x="15.5" y="8" width="4.3" height="4.3" rx="1" fill="none" stroke="#8a8a8a" stroke-width="1.1"/></svg>
<svg style="left:1392px;top:68px;" width="18" height="14" viewBox="0 0 18 14"><rect x="0" y="0.3" width="18" height="1.5" fill="#25a7dc"/><rect x="0" y="4.3" width="18" height="1.5" fill="#25a7dc"/><rect x="0" y="8.3" width="18" height="1.5" fill="#25a7dc"/><rect x="0" y="12.3" width="18" height="1.5" fill="#25a7dc"/></svg>
<svg style="left:1422px;top:68.5px;" width="20" height="13" viewBox="0 0 20 13"><rect x=".600" y=".600" width="18.8" height="11.8" rx="1" fill="none" stroke="#8a8a8a" stroke-width="1.2"/><path d="M7 .6v11.8M13 .6v11.8" stroke="#8a8a8a" stroke-width="1.2"/></svg>
<svg style="left:1453px;top:68.5px;" width="21" height="13" viewBox="0 0 21 13"><path d="M1 0v13M3.5 .500v12M20 0v13M17.5 .500v12" stroke="#8a8a8a" stroke-width="1.1"/><rect x="6" y="1.2" width="9" height="10.6" rx="1" fill="none" stroke="#8a8a8a" stroke-width="1.2"/></svg>
<svg style="left:302px;top:100.5px;" width="9" height="10" viewBox="0 0 9 10"><path d="M.700 .500v9.5" stroke="#9a9a9a" stroke-width="1.3"/><path d="M1.3 1h7v5h-7z" fill="#9a9a9a"/></svg>
<div style="left:323px;top:96px;width:1px;height:21px;background:#e6e6e6"></div>
<div style="left:665.5px;top:96px;width:1px;height:21px;background:#e6e6e6"></div>
<div style="left:815.5px;top:96px;width:1px;height:21px;background:#e6e6e6"></div>
<div style="left:925px;top:96px;width:1px;height:21px;background:#e6e6e6"></div>
<div style="left:1016px;top:96px;width:1px;height:21px;background:#e6e6e6"></div>
<div style="left:1453.5px;top:96px;width:1px;height:21px;background:#e6e6e6"></div>
<span class="t ui" style="left:346px;top:97.5px;height:18px;line-height:18px;font-weight:bold;font-size:14px;color:#2e2e2e;letter-spacing:0.39px">Name</span>
<svg style="left:646.5px;top:101.5px;" width="10" height="9" viewBox="0 0 10 9"><path d="M5 .500L9.7 8.5H.300z" fill="#777"/></svg>
<span class="t ui" style="left:674.5px;top:97.5px;height:18px;line-height:18px;font-size:14px;letter-spacing:.3px;color:#303030;-webkit-text-stroke:.3px;letter-spacing:0.63px">Modified</span>
<span class="t ui" style="left:824px;top:97.5px;height:18px;line-height:18px;font-size:14px;letter-spacing:.3px;color:#303030;-webkit-text-stroke:.3px">Kind</span>
<span class="t ui" style="left:934px;top:97.5px;height:18px;line-height:18px;font-size:14px;letter-spacing:.3px;color:#303030;-webkit-text-stroke:.3px">Size</span>
<span class="t ui" style="left:1025px;top:97.5px;height:18px;line-height:18px;font-size:14px;letter-spacing:.3px;color:#303030;-webkit-text-stroke:.3px">URL</span>
<div style="left:287px;top:150.8px;width:1168px;height:21.5px;background:#f4f5f5;border-radius:6px"></div>
<div style="left:287px;top:195.8px;width:1168px;height:21.5px;background:#f4f5f5;border-radius:6px"></div>
<div style="left:287px;top:240.8px;width:1168px;height:21.5px;background:#f4f5f5;border-radius:6px"></div>
<div style="left:287px;top:285.8px;width:1168px;height:21.5px;background:#f4f5f5;border-radius:6px"></div>
<div style="left:287px;top:330.8px;width:1168px;height:21.5px;background:#f4f5f5;border-radius:6px"></div>
<div style="left:287px;top:375.8px;width:1168px;height:21.5px;background:#f4f5f5;border-radius:6px"></div>
<div style="left:287px;top:173.3px;width:1168px;height:21.7px;background:#dcdcdc;border-radius:6px"></div>
<svg style="left:328px;top:135.5px;" width="12" height="8" viewBox="0 0 12 8"><path d="M1.3 1.5L6 6.3 10.7 1.5" fill="none" stroke="#6a6a6a" stroke-width="1.7" stroke-linecap="round" stroke-linejoin="round"/></svg>
<svg style="left:347.5px;top:130.5px;" width="17" height="17" viewBox="0 0 17 17"><rect x=".500" y=".500" width="10" height="16" rx="1.2" fill="#19a7e6"/><rect x="11.7" y="1" width="1.6" height="15" fill="#19a7e6"/><rect x="14.6" y="1" width="1.6" height="15" fill="#6cc3ee"/></svg>
<span class="t ui" style="left:371.2px;top:131.2px;height:18px;line-height:18px;font-size:13.3px;color:#1f1f1f;letter-spacing:0.85px">Actigraphy</span>
<span class="t ui" style="right:1259.5px;text-align:right;top:130.5px;height:18px;line-height:18px;font-size:13.3px;color:#8a8a8a">4</span>
<span class="t ui" style="left:672.5px;top:130px;height:18px;line-height:18px;font-size:13.3px;color:#8a8a8a;letter-spacing:0.7px">2020/11/02, 3:07</span>
<span class="t ui" style="left:822px;top:130px;height:18px;line-height:18px;font-size:13.3px;color:#8a8a8a;letter-spacing:0.76px">Group</span>
<span class="t ui" style="right:907.5px;text-align:right;top:130px;height:18px;line-height:18px;font-size:13.3px;color:#8a8a8a;letter-spacing:.45px">24 MB</span>
<svg style="left:365.5px;top:151.5px;" width="20" height="20" viewBox="0 0 20 20"><rect x=".500" y=".500" width="19" height="19" fill="#fbfbfb" stroke="#b9b9b9" stroke-width="1"/><rect x="1.5" y="1.5" width="17" height="3.5" fill="#e3b9c2"/><rect x="2.5" y="6.5" width="8" height="1.5" fill="#dcdcdc"/><rect x="2.5" y="9.5" width="10" height="1.2" fill="#e3e3e3"/><rect x="2.5" y="12" width="7" height="1.2" fill="#e6e6e6"/><rect x="2.5" y="14.5" width="9" height="1.2" fill="#e6e6e6"/><rect x="13.5" y="7" width="4" height="9" fill="#ececec"/></svg>
<span class="t ui" style="left:390.7px;top:153.7px;height:18px;line-height:18px;font-size:13.3px;color:#1f1f1f;letter-spacing:0.58px">Daily Actigraphy Pr…s in Bipolar Disorder</span>
<span class="t ui" style="left:672.5px;top:152.5px;height:18px;line-height:18px;font-size:13.3px;color:#8a8a8a;letter-spacing:0.7px">2020/11/02, 3:05</span>
<span class="t ui" style="left:822px;top:152.5px;height:18px;line-height:18px;font-size:13.3px;color:#8a8a8a;letter-spacing:0.66px">Web archive</span>
<span class="t ui" style="right:907.5px;text-align:right;top:152.5px;height:18px;line-height:18px;font-size:13.3px;color:#8a8a8a;letter-spacing:.45px">2 MB</span>
<span class="t ui" style="left:1023px;top:152.5px;height:18px;line-height:18px;font-size:13.3px;color:#1f1f1f;letter-spacing:0.8px">https://www.ncbi.nlm.nih.gov/pmc/articles/PMC5022043/</span>
<svg style="left:365.5px;top:174px;" width="20" height="20" viewBox="0 0 20 20"><rect x=".500" y=".500" width="19" height="19" fill="#fdfdfd" stroke="#a9a9a9" stroke-width="1"/><rect x="1.5" y="1.5" width="17" height="2" fill="#4b4f66"/><rect x="2.5" y="5.5" width="12" height="1" fill="#d8d8d8"/><rect x="2" y="9.5" width="16" height="1.6" fill="#6b6b5a"/><rect x="2" y="9.5" width="5" height="1.6" fill="#b8b04a"/><rect x="2.5" y="13" width="10" height="1" fill="#dedede"/><rect x="2.5" y="15.5" width="10" height="1" fill="#e2e2e2"/><rect x="15" y="14.5" width="3" height="3.5" fill="#4b6f7a"/></svg>
<span class="t ui" style="left:390.7px;top:176.2px;height:18px;line-height:18px;font-size:13.3px;color:#1f1f1f;letter-spacing:0.63px">Multiscale adaptive…e insomnia subjects</span>
<span class="t ui" style="left:672.5px;top:175px;height:18px;line-height:18px;font-size:13.3px;color:#8a8a8a;letter-spacing:0.7px">2020/11/02, 3:06</span>
<span class="t ui" style="left:822px;top:175px;height:18px;line-height:18px;font-size:13.3px;color:#8a8a8a;letter-spacing:0.66px">Web archive</span>
<span class="t ui" style="right:907.5px;text-align:right;top:175px;height:18px;line-height:18px;font-size:13.3px;color:#8a8a8a;letter-spacing:.45px">8.9 MB</span>
<span class="t ui" style="left:1023px;top:175px;height:18px;line-height:18px;font-size:13.3px;color:#1f1f1f;letter-spacing:0.56px">https://journals.plos.org/ploson…d=10.1371/journal.pone.0181762</span>
<svg style="left:365.5px;top:196.5px;" width="20" height="20" viewBox="0 0 20 20"><rect x=".500" y=".500" width="19" height="19" fill="#fbfbfb" stroke="#b9b9b9" stroke-width="1"/><rect x="1.5" y="1.5" width="17" height="3.5" fill="#e3b9c2"/><rect x="2.5" y="6.5" width="8" height="1.5" fill="#dcdcdc"/><rect x="2.5" y="9.5" width="10" height="1.2" fill="#e3e3e3"/><rect x="2.5" y="12" width="7" height="1.2" fill="#e6e6e6"/><rect x="2.5" y="14.5" width="9" height="1.2" fill="#e6e6e6"/><rect x="13.5" y="7" width="4" height="9" fill="#ececec"/></svg>
<span class="t ui" style="left:390.7px;top:198.7px;height:18px;line-height:18px;font-size:13.3px;color:#1f1f1f;letter-spacing:0.49px">Organizing and anal…ity data in NHANES</span>
<span class="t ui" style="left:672.5px;top:197.5px;height:18px;line-height:18px;font-size:13.3px;color:#8a8a8a;letter-spacing:0.7px">2020/11/02, 3:05</span>
<span class="t ui" style="left:822px;top:197.5px;height:18px;line-height:18px;font-size:13.3px;color:#8a8a8a;letter-spacing:0.66px">Web archive</span>
<span class="t ui" style="right:907.5px;text-align:right;top:197.5px;height:18px;line-height:18px;font-size:13.3px;color:#8a8a8a;letter-spacing:.45px">2.8 MB</span>
<span class="t ui" style="left:1023px;top:197.5px;height:18px;line-height:18px;font-size:13.3px;color:#1f1f1f;letter-spacing:0.74px">https://www.ncbi.nlm.nih.gov/pmc/articles/PMC7012355/</span>
<svg style="left:365.5px;top:219px;" width="20" height="20" viewBox="0 0 20 20"><rect x=".500" y=".500" width="19" height="19" fill="#f7e3c8" stroke="#c9b9a0" stroke-width="1"/><rect x="1" y="1" width="18" height="6" fill="#d8261d"/><rect x="1" y="7" width="18" height="2" fill="#fff4ea"/><rect x="1" y="9" width="18" height="3.5" fill="#e2372c"/><rect x="1" y="12.5" width="18" height="1.5" fill="#f6d8b0"/><rect x="1" y="14" width="18" height="1.5" fill="#efc08a"/></svg>
<span class="t ui" style="left:390.7px;top:221.2px;height:18px;line-height:18px;font-size:13.3px;color:#1f1f1f;letter-spacing:0.63px">Quantification of Irr…ective | IntechOpen</span>
<span class="t ui" style="left:672.5px;top:220px;height:18px;line-height:18px;font-size:13.3px;color:#8a8a8a;letter-spacing:0.7px">2020/11/02, 3:05</span>
<span class="t ui" style="left:822px;top:220px;height:18px;line-height:18px;font-size:13.3px;color:#8a8a8a;letter-spacing:0.66px">Web archive</span>
<span class="t ui" style="right:907.5px;text-align:right;top:220px;height:18px;line-height:18px;font-size:13.3px;color:#8a8a8a;letter-spacing:.45px">1.6 MB</span>
<span class="t ui" style="left:1023px;top:220px;height:18px;line-height:18px;font-size:13.3px;color:#1f1f1f;letter-spacing:0.61px">https://www.intechopen.com/books/</span>
<svg style="left:328px;top:248px;" width="12" height="8" viewBox="0 0 12 8"><path d="M1.3 1.5L6 6.3 10.7 1.5" fill="none" stroke="#6a6a6a" stroke-width="1.7" stroke-linecap="round" stroke-linejoin="round"/></svg>
<svg style="left:347.5px;top:243px;" width="17" height="17" viewBox="0 0 17 17"><rect x=".500" y=".500" width="10" height="16" rx="1.2" fill="#19a7e6"/><rect x="11.7" y="1" width="1.6" height="15" fill="#19a7e6"/><rect x="14.6" y="1" width="1.6" height="15" fill="#6cc3ee"/></svg>
<span class="t ui" style="right:1259.5px;text-align:right;top:243px;height:18px;line-height:18px;font-size:13.3px;color:#8a8a8a">6</span>
<span class="t ui" style="left:672.5px;top:242.5px;height:18px;line-height:18px;font-size:13.3px;color:#8a8a8a;letter-spacing:0.7px">2021/03/11, 9:42</span>
<svg style="left:365.5px;top:264px;" width="20" height="20" viewBox="0 0 20 20"><rect x=".500" y=".500" width="19" height="19" fill="#fdfdfd" stroke="#b5b5b5" stroke-width="1"/><rect x="4" y="3.5" width="9" height="1" fill="#ddd"/><rect x="4" y="6.5" width="11" height="1" fill="#e4e4e4"/><rect x="4" y="9.5" width="11" height="1" fill="#e4e4e4"/><rect x="4" y="12.5" width="8" height="1" fill="#e6e6e6"/></svg>
<span class="t ui" style="left:672.5px;top:265px;height:18px;line-height:18px;font-size:13.3px;color:#8a8a8a;letter-spacing:0.63px">2020/10/28, 9:12</span>
<svg style="left:365.5px;top:288.5px;" width="20" height="16" viewBox="0 0 20 16"><rect x=".500" y=".500" width="19" height="15" fill="#fdfdfd" stroke="#b5b5b5" stroke-width="1"/><rect x="4" y="4" width="10" height="1" fill="#e2e2e2"/><rect x="4" y="7" width="11" height="1" fill="#e6e6e6"/><rect x="4" y="10" width="8" height="1" fill="#e6e6e6"/></svg>
<span class="t ui" style="left:672.5px;top:287.5px;height:18px;line-height:18px;font-size:13.3px;color:#8a8a8a;letter-spacing:0.63px">2020/10/28, 9:14</span>
<svg style="left:365.5px;top:309px;" width="20" height="20" viewBox="0 0 20 20"><rect x=".500" y=".500" width="19" height="19" fill="#fdfdfd" stroke="#b5b5b5" stroke-width="1"/><rect x="3" y="4" width="6" height="12" fill="#e2e2e2"/><rect x="3" y="5" width="5" height="1.5" fill="#cfcfcf"/></svg>
<span class="t ui" style="left:672.5px;top:310px;height:18px;line-height:18px;font-size:13.3px;color:#8a8a8a;letter-spacing:0.63px">2020/10/28, 9:15</span>
<svg style="left:365.5px;top:331.5px;" width="20" height="20" viewBox="0 0 20 20"><rect x=".500" y=".500" width="19" height="19" fill="#fdfdfd" stroke="#b5b5b5" stroke-width="1"/><rect x="4" y="3.5" width="9" height="1" fill="#ddd"/><rect x="4" y="6.5" width="11" height="1" fill="#e4e4e4"/><rect x="4" y="9.5" width="11" height="1" fill="#e4e4e4"/><rect x="4" y="12.5" width="8" height="1" fill="#e6e6e6"/></svg>
<span class="t ui" style="left:390.7px;top:333.7px;height:18px;line-height:18px;font-size:13.3px;color:#1f1f1f;letter-spacing:0.61px">Evaluation Metrics,…imbalanced datasets</span>
<span class="t ui" style="left:672.5px;top:332.5px;height:18px;line-height:18px;font-size:13.3px;color:#8a8a8a;letter-spacing:0.63px">2020/10/28, 9:20</span>
<svg style="left:365.5px;top:359px;" width="20" height="12" viewBox="0 0 20 12"><rect x=".500" y=".500" width="19" height="11" fill="#f3f3f3" stroke="#a8a8a8" stroke-width="1"/><rect x="1" y="7" width="18" height="4" fill="#fff"/><rect x="3" y="3" width="14" height="1.5" fill="#9a9a8a"/><rect x="9" y="4.5" width="7" height="1.7" fill="#d6d640"/><rect x="7" y="8" width="6" height="1" fill="#aaa"/></svg>
<span class="t ui" style="left:390.7px;top:356.2px;height:18px;line-height:18px;font-size:13.3px;color:#1f1f1f;letter-spacing:0.62px">MLSS2020_Fairness</span>
<span class="t ui" style="left:672.5px;top:355px;height:18px;line-height:18px;font-size:13.3px;color:#8a8a8a;letter-spacing:0.85px">Today, 16:02</span>
<svg style="left:365.5px;top:376.5px;" width="20" height="20" viewBox="0 0 20 20"><rect x=".500" y=".500" width="19" height="19" fill="#fdfdfd" stroke="#b5b5b5" stroke-width="1"/><rect x="1" y="10" width="18" height="9" fill="#e4e4e4"/></svg>
<span class="t ui" style="left:672.5px;top:377.5px;height:18px;line-height:18px;font-size:13.3px;color:#8a8a8a;letter-spacing:0.63px">2020/10/29, 8:30</span>
<div style="left:371px;top:245px;width:6px;height:9px;background:#9e9e9e"></div>
<div style="left:377px;top:245px;width:15px;height:9px;background:#c4c4c4"></div>
<div style="left:392px;top:245px;width:50px;height:14px;background:#cfcfcf"></div>
<div style="left:442px;top:245px;width:30px;height:9px;background:#d4d4d4"></div>
<div style="left:472px;top:245px;width:12px;height:8px;background:#bdbdbd"></div>
<div style="left:484px;top:245px;width:12px;height:13px;background:#d0d0d0"></div>
<div style="left:496px;top:245px;width:17px;height:9px;background:#d2d2d2"></div>
<div style="left:392px;top:254px;width:8px;height:6px;background:#c8c8c8"></div>
<div style="left:386.6px;top:264.5px;width:27.6px;height:20.5px;background:#ededed"></div>
<div style="left:414.2px;top:264.5px;width:64.7px;height:20.5px;background:#d6d6d6"></div>
<div style="left:478.9px;top:264.5px;width:58.6px;height:20.5px;background:#cecece"></div>
<div style="left:537.5px;top:264.5px;width:43.2px;height:20.5px;background:#e2e2e2"></div>
<div style="left:580.7px;top:264.5px;width:52.7px;height:20.5px;background:#cdcdcd"></div>
<div style="left:633.4px;top:264.5px;width:29.9px;height:20.5px;background:#e4e4e4"></div>
<div style="left:423.7px;top:275px;width:43.2px;height:10px;background:#d0d0d0"></div>
<div style="left:466.9px;top:275px;width:12px;height:10px;background:#e8e8e8"></div>
<div style="left:478.9px;top:275px;width:16.7px;height:10px;background:#cfcfcf"></div>
<div style="left:495.6px;top:275px;width:31.2px;height:10px;background:#d8d8d8"></div>
<div style="left:565.1px;top:275px;width:28.7px;height:10px;background:#d4d4d4"></div>
<div style="left:593.8px;top:275px;width:14.4px;height:10px;background:#e0e0e0"></div>
<div style="left:608.2px;top:275px;width:25.2px;height:10px;background:#cfcfcf"></div>
<div style="left:386.6px;top:285px;width:37.1px;height:12px;background:#e8e8e8"></div>
<div style="left:423.7px;top:285px;width:62.3px;height:12px;background:#d4d4d4"></div>
<div style="left:486px;top:285px;width:40.8px;height:12px;background:#e2e2e2"></div>
<div style="left:526.8px;top:285px;width:52.7px;height:12px;background:#e8e8e8"></div>
<div style="left:579.5px;top:285px;width:28.7px;height:12px;background:#d4d4d4"></div>
<div style="left:608.2px;top:285px;width:25.2px;height:12px;background:#cbcbcb"></div>
<div style="left:633.4px;top:285px;width:29.9px;height:12px;background:#e6e6e6"></div>
<div style="left:386.6px;top:297px;width:19.2px;height:11px;background:#ededed"></div>
<div style="left:405.8px;top:297px;width:37.1px;height:11px;background:#d2d2d2"></div>
<div style="left:442.9px;top:297px;width:53.9px;height:11px;background:#d8d8d8"></div>
<div style="left:513.6px;top:297px;width:38.3px;height:11px;background:#cfcfcf"></div>
<div style="left:568.7px;top:297px;width:10.8px;height:11px;background:#dcdcdc"></div>
<div style="left:598.6px;top:297px;width:21.6px;height:11px;background:#d8d8d8"></div>
<div style="left:637px;top:297px;width:26.3px;height:11px;background:#e2e2e2"></div>
<div style="left:386.6px;top:308px;width:19.2px;height:9px;background:#ededed"></div>
<div style="left:405.8px;top:308px;width:37.1px;height:9px;background:#d4d4d4"></div>
<div style="left:442.9px;top:308px;width:40.7px;height:9px;background:#dcdcdc"></div>
<div style="left:513.6px;top:308px;width:14.4px;height:9px;background:#d8d8d8"></div>
<div style="left:598.6px;top:308px;width:9.6px;height:9px;background:#dcdcdc"></div>
<div style="left:637px;top:308px;width:26.3px;height:9px;background:#ebebeb"></div>
<div style="left:386.6px;top:317px;width:55.1px;height:12px;background:#d6d6d6"></div>
<div style="left:441.7px;top:317px;width:55.1px;height:12px;background:#e6e6e6"></div>
<div style="left:388px;top:377px;width:276px;height:21px;background:#f0f0f0"></div>
<div style="left:388px;top:377px;width:16px;height:8px;background:#c3c3c3"></div>
<div style="left:404px;top:379px;width:8px;height:5px;background:#b5b5b5"></div>
<div style="left:412px;top:383px;width:16px;height:8px;background:#bdbdbd"></div>
<div style="left:436px;top:382px;width:8px;height:16px;background:#cbcbcb"></div>
<div style="left:454px;top:383px;width:6px;height:8px;background:#d8d8d8"></div>
<div style="left:468px;top:384px;width:16px;height:7px;background:#d1d1d1"></div>
<div style="left:484px;top:382px;width:16px;height:8px;background:#c4c4c4"></div>
<div style="left:494px;top:385px;width:12px;height:6px;background:#b2b2b2"></div>
<div style="left:506px;top:382px;width:10px;height:8px;background:#d4d4d4"></div>
<div style="left:516px;top:377px;width:10px;height:14px;background:#cfcfcf"></div>
<div style="left:526px;top:377px;width:12px;height:8px;background:#bfbfbf"></div>
<div style="left:538px;top:383px;width:14px;height:8px;background:#c6c6c6"></div>
<div style="left:562px;top:377px;width:10px;height:8px;background:#cccccc"></div>
<div style="left:568px;top:385px;width:10px;height:6px;background:#bdbdbd"></div>
<div style="left:578px;top:379px;width:14px;height:12px;background:#d6d6d6"></div>
<div style="left:592px;top:383px;width:20px;height:8px;background:#d9d9d9"></div>
<div style="left:612px;top:377px;width:16px;height:12px;background:#c9c9c9"></div>
<div style="left:622px;top:385px;width:12px;height:6px;background:#bcbcbc"></div>
<div style="left:634px;top:383px;width:8px;height:8px;background:#d0d0d0"></div>
<div style="left:1467.5px;top:120px;width:1px;height:284px;background:#ededed"></div>
<div style="left:1468.5px;top:120px;width:17.5px;height:284px;background:#fafafa"></div>
<div style="left:1472.5px;top:126px;width:9.5px;height:300px;background:#c1c1c1;border-radius:5px"></div>
<div style="left:275px;top:404px;width:1211.5px;height:1px;background:#d6d6d6"></div>
<div style="left:275px;top:437.5px;width:1211.5px;height:1px;background:#dedede"></div>
<svg style="left:296.5px;top:413.5px;" width="11" height="17" viewBox="0 0 11 17"><path d="M9 1.5L2 8.5l7 7" fill="none" stroke="#1e1e1e" stroke-width="2.2" stroke-linecap="round" stroke-linejoin="round"/></svg>
<svg style="left:322.5px;top:413.5px;" width="11" height="17" viewBox="0 0 11 17"><path d="M2 1.5L9 8.5l-7 7" fill="none" stroke="#8a8a8a" stroke-width="2" stroke-linecap="round" stroke-linejoin="round"/></svg>
<div style="left:354.5px;top:409px;width:1px;height:25px;background:#e4e4e4"></div>
<svg style="left:375px;top:412.5px;" width="16" height="18" viewBox="0 0 16 18"><path d="M13.7 7.2A6.2 6.2 0 1 1 8 4.3" fill="none" stroke="#3a3a3a" stroke-width="1.4" stroke-linecap="round"/><path d="M7.3 .800L11.2 4.3 7.3 7.8z" fill="#3a3a3a"/></svg>
<svg style="left:406.5px;top:414px;" width="16" height="16" viewBox="0 0 16 16"><path fill-rule="evenodd" fill="#555" d="M13.06 6.79 L15.7 6.78 L15.7 9.22 L13.06 9.21 L12.43 10.72 L14.31 12.58 L12.58 14.31 L10.72 12.43 L9.21 13.06 L9.22 15.7 L6.78 15.7 L6.79 13.06 L5.28 12.43 L3.42 14.31 L1.69 12.58 L3.57 10.72 L2.94 9.21 L0.3 9.22 L0.3 6.78 L2.94 6.79 L3.57 5.28 L1.69 3.42 L3.42 1.69 L5.28 3.57 L6.79 2.94 L6.78 0.3 L9.22 0.3 L9.21 2.94 L10.72 3.57 L12.58 1.69 L14.31 3.42 L12.43 5.28Z M10.7 8 A2.7 2.7 0 1 0 5.3 8 A2.7 2.7 0 1 0 10.7 8Z"/></svg>
<svg style="left:425.5px;top:421px;" width="6" height="4" viewBox="0 0 6 4"><path d="M0 0h6L3 3.5z" fill="#333"/></svg>
<svg style="left:441px;top:413px;" width="18" height="18" viewBox="0 0 18 18"><defs><radialGradient id="gl" cx=".35" cy=".3" r=".8"><stop offset="0" stop-color="#9fd0ff"/><stop offset=".5" stop-color="#2f7fe6"/><stop offset="1" stop-color="#0b3fa8"/></radialGradient></defs><circle cx="9" cy="9" r="8.5" fill="url(#gl)"/><path d="M4 5c2-2 4-2.5 6-1.5 1 1.5-.500 3-2 3.5-1 1.5.500 3-1 4.5-2-.500-3.5-3-3-6.5zM11.5 9c1.5-1 3.5-.500 4.5 1-.300 2.5-1.5 4-3.5 5-1.5-1.5-2-4-1-6z" fill="#dff0ff" opacity=".85"/></svg>
<span class="t ui" style="left:462.5px;top:413px;height:18px;line-height:18px;font-size:14px;letter-spacing:.43px;color:#262626">https://journals.plos.org/plosone/article?id=10.1371/journal.pone.0181762</span>
<span class="t nav" style="left:287px;top:449px;height:20px;line-height:20px;">Discussion</span>
<span class="t nav" style="left:287px;top:482.72px;height:20px;line-height:20px;">Conclusion</span>
<span class="t nav" style="left:287px;top:516.44px;height:20px;line-height:20px;">Supporting information</span>
<span class="t nav" style="left:287px;top:550.16px;height:20px;line-height:20px;">Acknowledgments</span>
<span class="t nav" style="left:287px;top:583.88px;height:20px;line-height:20px;">References</span>
<div style="left:275px;top:626px;width:199px;height:1px;background:#8e8e8e"></div>
<span class="t nav" style="left:287px;top:643.2px;height:20px;line-height:20px;">Correction</span>
<span class="t nav" style="left:287px;top:676.92px;height:20px;line-height:20px;">Abstract</span>
<span class="t nav" style="left:287px;top:710.64px;height:20px;line-height:20px;">Introduction</span>
<span class="t nav" style="left:287px;top:744.36px;height:20px;line-height:20px;">Materials and methods</span>
<span class="t nav" style="left:287px;top:778.08px;height:20px;line-height:20px;">Results</span>
<span class="t nav" style="left:287px;top:811.8px;height:20px;line-height:20px;">Discussion</span>
<span class="t nav" style="left:287px;top:845.52px;height:20px;line-height:20px;">Conclusion</span>
<span class="t nav" style="left:287px;top:879.24px;height:20px;line-height:20px;">Supporting information</span>
<span class="t nav" style="left:287px;top:912.96px;height:20px;line-height:20px;">Acknowledgments</span>
<span class="t nav" style="left:287px;top:946.68px;height:20px;line-height:20px;">References</span>
<div style="left:275px;top:989.3px;width:199px;height:1px;background:#8e8e8e"></div>
<span class="t nav" style="left:287px;top:1006.5px;height:20px;line-height:20px;">Correction</span>
<span class="t nav" style="left:287px;top:1040.22px;height:20px;line-height:20px;">Abstract</span>
<div style="left:530.5px;top:438.5px;width:686px;height:18.5px;background:#efefef"></div>
<span class="t web" style="left:530px;top:473.5px;height:32px;line-height:32px;font-size:26px;letter-spacing:-.6px;color:#1c1c1c">Abstract</span>
<span class="t web" style="left:530.3px;top:525.3px;height:22px;line-height:22px;">Circadian rhythms become less dominant and less regular with chronic-degenerative disease,</span>
<span class="t web" style="left:530.3px;top:547.77px;height:22px;line-height:22px;">such that to accurately assess these pathological conditions it is important to quantify not only</span>
<span class="t web" style="left:530.3px;top:570.24px;height:22px;line-height:22px;">periodic characteristics but also more irregular aspects of the corresponding time series. Novel</span>
<span class="t web" style="left:530.3px;top:592.71px;height:22px;line-height:22px;">data-adaptive techniques, such as singular spectrum analysis (SSA), allow for the</span>
<span class="t web" style="left:530.3px;top:615.18px;height:22px;line-height:22px;">decomposition of experimental time series, in a model-free way, into a trend, quasi-periodic</span>
<span class="t web" style="left:530.3px;top:637.65px;height:22px;line-height:22px;">components and noise fluctuations. We compared SSA with the traditional techniques of</span>
<span class="t web" style="left:530.3px;top:660.12px;height:22px;line-height:22px;">cosinor analysis and intradaily variability using 1-week continuous actigraphy data in young</span>
<span class="t web" style="left:530.3px;top:682.59px;height:22px;line-height:22px;">adults with acute insomnia and healthy age-matched controls. The findings suggest a small but</span>
<span class="t web" style="left:530.3px;top:705.06px;height:22px;line-height:22px;">significant delay in circadian components in the subjects with acute insomnia, i.e. a larger</span>
<span class="t web" style="left:530.3px;top:727.53px;height:22px;line-height:22px;">acrophase, and alterations in the day-to-day variability of acrophase and amplitude. The power</span>
<span class="t web" style="left:530.3px;top:750px;height:22px;line-height:22px;">of the ultradian components follows a fractal 1/f power law for controls, whereas for those with</span>
<span class="t web" style="left:530.3px;top:772.47px;height:22px;line-height:22px;">acute insomnia this power law breaks down because of an increased variability at the 90min</span>
<span class="t web" style="left:530.3px;top:794.94px;height:22px;line-height:22px;">time scale, reminiscent of Kleitman’s basic rest-activity (BRAC) cycles. This suggests that for</span>
<span class="t web" style="left:530.3px;top:817.41px;height:22px;line-height:22px;">healthy sleepers attention and activity can be sustained at whatever time scale required by</span>
<span class="t web" style="left:530.3px;top:839.88px;height:22px;line-height:22px;">circumstances, whereas for those with acute insomnia this capacity may be impaired and these</span>
<span class="t web" style="left:530.3px;top:862.35px;height:22px;line-height:22px;">individuals need to rest or switch activities in order to stay focused. Traditional methods of</span>
<span class="t web" style="left:530.3px;top:884.82px;height:22px;line-height:22px;">circadian rhythm analysis are unable to detect the more subtle effects of day-to-day variability</span>
<span class="t web" style="left:530.3px;top:907.29px;height:22px;line-height:22px;">and ultradian rhythm fragmentation at the specific 90min time scale.</span>
<span class="t web" style="left:530.5px;top:945.3px;height:32px;line-height:32px;font-size:26px;letter-spacing:-.55px;color:#1c1c1c">Figures</span>
<div style="left:530.5px;top:997px;width:686px;height:62px;background:#f0f0f0"></div>
<div style="left:554px;top:1019px;width:205px;height:40px;background:#fff"></div>
<div style="left:771.5px;top:1019px;width:204px;height:40px;background:#fdfdfd"></div>
<div style="left:988px;top:1019px;width:205px;height:40px;background:#fcfcfc"></div>
<svg style="left:554px;top:1019px" width="205" height="40" viewBox="0 0 205 40"><rect x="31" y="4" width="142" height="20" fill="none" stroke="#eee" stroke-width=".5"/><path d="M32 23 L33.6 21.6 L35.3 21.8 L36.9 22.9 L38.5 22.5 L40.2 22.6 L41.8 22.2 L43.5 21.8 L45.1 23 L46.7 23 L48.4 21.6 L50 22.6" fill="none" stroke="#4a4ad8" stroke-width=".7"/><path d="M50 12.9 L50.8 13.1 L51.7 23 L52.5 22.9 L53.4 15.3 L54.2 17 L55.1 18.1 L55.9 22 L56.8 19 L57.6 18.9 L58.5 19.3 L59.3 22.7 L60.2 21 L61 21.3 L61.9 17.2 L62.7 12.1 L63.6 13.1 L64.4 19.7 L65.3 20.8 L66.1 22.2 L66.9 23 L67.8 23 L68.6 20.6 L69.5 21.9 L70.3 21.4 L71.2 14.3 L72 20 L72.9 19.5 L73.7 22.4 L74.6 23 L75.4 21.8 L76.3 22.8 L77.1 20.1 L78 12 L78.8 18 L79.7 22.6 L80.5 14.2 L81.4 16 L82.2 17.1 L83.1 14 L83.9 16.6 L84.7 16.1 L85.6 21.6 L86.4 12.4 L87.3 12.8 L88.1 22.7 L89 16.7 L89.8 17.4 L90.7 20.7 L91.5 19.9 L92.4 20.4 L93.2 13.6 L94.1 20.2 L94.9 15.4 L95.8 21.6 L96.6 14.4 L97.5 14.1 L98.3 20.7 L99.2 19.5 L100 13.7" fill="none" stroke="#2b2bd0" stroke-width=".8"/><path d="M104 22 L104.8 18 L105.5 20.7 L106.3 16.8 L107 16.3 L107.8 22.9 L108.6 23 L109.3 11.1 L110.1 21.9 L110.9 22.1 L111.6 6.1 L112.4 19.2 L113.1 11.1 L113.9 19.1 L114.7 16.1 L115.4 22.6 L116.2 16.1 L117 10.2 L117.7 18.3 L118.5 13.7 L119.2 15.3 L120 22.9" fill="none" stroke="#e64040" stroke-width=".8"/><path d="M120 22.8 L121.8 23 L123.6 22.5 L125.5 22.9 L127.3 23 L129.1 22.5 L130.9 20.5 L132.7 21.1 L134.5 21.2 L136.4 22.9 L138.2 22.1 L140 22.8" fill="none" stroke="#e88" stroke-width=".6"/><path d="M140 16.8 L140.8 14.2 L141.5 12.9 L142.3 8.8 L143.1 14.2 L143.8 9.4 L144.6 23 L145.4 19.5 L146.1 8.8 L146.9 16.3 L147.7 10 L148.4 22.8 L149.2 19.5 L150 22 L150.7 18.3 L151.5 17.7 L152.3 23 L153 22.2 L153.8 21.8 L154.6 9.6 L155.3 13.6 L156.1 22.6 L156.9 12.8 L157.7 22.7 L158.4 16.9 L159.2 22.7 L160 23 L160.7 10.9 L161.5 22.3 L162.3 22.3 L163 7.6 L163.8 10.8 L164.6 21.7 L165.3 8.2 L166.1 18.3 L166.9 15.6 L167.6 22.3 L168.4 8.8 L169.2 15.4 L169.9 8.1 L170.7 10.2 L171.5 21.6 L172.2 20.9 L173 22.6" fill="none" stroke="#e02a2a" stroke-width=".8"/><path d="M56 34 L57 33.6 L58 37.1 L59.1 38.5 L60.1 39 L61.1 35.5 L62.1 37.2 L63.2 34.4 L64.2 37.9 L65.2 34.3 L66.2 38.4 L67.3 33.9 L68.3 34.7 L69.3 37.6 L70.3 36.7 L71.3 35.3 L72.4 38.7 L73.4 36.5 L74.4 33.8 L75.4 38.4 L76.5 33.8 L77.5 35.2 L78.5 33.3 L79.5 38.1 L80.6 38.9 L81.6 33.9 L82.6 33.8 L83.6 37.4 L84.7 38.9 L85.7 38.7 L86.7 35.8 L87.7 38.3 L88.7 31.8 L89.8 36.2 L90.8 38.7 L91.8 35.6 L92.8 38 L93.9 32 L94.9 32.4 L95.9 36.9 L96.9 35.7 L98 35.1 L99 33.8 L100 31.4" fill="none" stroke="#3a3ad8" stroke-width=".8"/><path d="M104 37.5 L104.9 38.7 L105.9 33.1 L106.8 38.9 L107.7 35 L108.7 37.1 L109.6 39 L110.5 35.4 L111.5 39 L112.4 36.4 L113.3 38.9 L114.3 38.9 L115.2 36.5 L116.1 29.4 L117.1 38.8 L118 38.3" fill="none" stroke="#e64040" stroke-width=".8"/><path d="M142 38.5 L142.9 29.7 L143.8 38.8 L144.7 34 L145.5 38.9 L146.4 38.4 L147.3 29 L148.2 38.6 L149.1 34.9 L150 36.9 L150.9 36.9 L151.7 36.5 L152.6 38.6 L153.5 32.1 L154.4 38.9 L155.3 38.5 L156.2 39 L157.1 38.3 L157.9 37.3 L158.8 30.9 L159.7 37.6 L160.6 38.9 L161.5 38.3 L162.4 29.2 L163.3 39 L164.1 35.2 L165 37.6 L165.9 34.6 L166.8 37.9 L167.7 34.2 L168.6 36.5 L169.5 34.8 L170.3 30.9 L171.2 35.6 L172.1 38.8 L173 39" fill="none" stroke="#e02a2a" stroke-width=".8"/></svg>
<svg style="left:771.5px;top:1019px" width="204" height="40" viewBox="0 0 204 40"><rect x="78" y="7" width="12" height="33" fill="#eeb272"/><rect x="189" y="7" width="7" height="33" fill="#eeb272"/><path d="M25 7h172M68 7v33M111 7v33M154 7v33" stroke="#e3e3e3" stroke-width=".6" fill="none"/><path d="M76 37.5 L76.9 37.3 L77.9 40 L78.8 34.6 L79.7 34.2 L80.7 34.2 L81.6 29.5 L82.5 32.1 L83.4 32.6 L84.4 33.6 L85.3 25.9 L86.2 27.4 L87.2 24.7 L88.1 31.3 L89 29.5 L90 22.4 L90.9 31.3 L91.8 30.6 L92.7 26.9 L93.7 26 L94.6 21 L95.5 19 L96.5 23.7 L97.4 18.5 L98.3 19.4 L99.3 19.4 L100.2 16.9 L101.1 20.8 L102 20.1 L103 23.7 L103.9 20.1 L104.8 20.9 L105.8 19.1 L106.7 20.4 L107.6 18 L108.6 15.9 L109.5 22.7 L110.4 22.4 L111.3 20.5 L112.3 18.9 L113.2 14.7 L114.1 13.5 L115.1 13.9 L116 11.4 L116.9 18.1 L117.9 14.2 L118.8 18.5 L119.7 13.7 L120.7 19.2 L121.6 17.9 L122.5 9.2 L123.4 11.2 L124.4 18 L125.3 13.5 L126.2 18.5 L127.2 12.5 L128.1 9.2 L129 14.6 L130 16 L130.9 10.9 L131.8 9 L132.7 11.4 L133.7 17.7 L134.6 15.6 L135.5 9.2 L136.5 10.5 L137.4 9 L138.3 8.6 L139.3 16 L140.2 9.9 L141.1 13.8 L142 12.7 L143 10.2 L143.9 15.7 L144.8 9.8 L145.8 15.1 L146.7 9.9 L147.6 13.1 L148.6 11.2 L149.5 11.9 L150.4 19.1 L151.3 17.6 L152.3 12.8 L153.2 18.9 L154.1 12.3 L155.1 14.4 L156 19.3 L156.9 17.4 L157.9 12.2 L158.8 21.4 L159.7 13.9 L160.7 14.7 L161.6 20.1 L162.5 16 L163.4 16 L164.4 14.2 L165.3 14.7 L166.2 20 L167.2 17 L168.1 20.9 L169 19 L170 20.3 L170.9 25.7 L171.8 21.4 L172.7 22.8 L173.7 26.1 L174.6 19.8 L175.5 19.9 L176.5 28 L177.4 27.6 L178.3 22.4 L179.3 22.3 L180.2 28.3 L181.1 30.9 L182 24 L183 32.1 L183.9 32 L184.8 29.8 L185.8 28.6 L186.7 26 L187.6 26 L188.6 35.9 L189.5 29.3 L190.4 34.7 L191.3 30.9 L192.3 37.4 L193.2 35.9 L194.1 33.7 L195.1 33.5 L196 40.2" fill="none" stroke="#2a35d6" stroke-width="1"/><path d="M76 36.7 L76.9 37.5 L77.9 36.6 L78.8 30 L79.7 27.7 L80.7 31 L81.6 29.2 L82.5 34.4 L83.4 32.4 L84.4 30.7 L85.3 29.6 L86.2 30.1 L87.2 23.9 L88.1 26.5 L89 22.9 L90 30.5 L90.9 20.6 L91.8 28.4 L92.7 19.7 L93.7 25.9 L94.6 21.6 L95.5 21.8 L96.5 26.2 L97.4 16.6 L98.3 16.6 L99.3 25.6 L100.2 20.7 L101.1 15.6 L102 25.1 L103 24.2 L103.9 14.6 L104.8 17.7 L105.8 14.1 L106.7 15.7 L107.6 18.8 L108.6 13.4 L109.5 18.9 L110.4 11.5 L111.3 12.5 L112.3 19.3 L113.2 14.4 L114.1 14.3 L115.1 16 L116 14.5 L116.9 13.2 L117.9 9.1 L118.8 16.5 L119.7 18.9 L120.7 18.8 L121.6 15.2 L122.5 11.7 L123.4 11.6 L124.4 15 L125.3 14.7 L126.2 8.4 L127.2 9.6 L128.1 10.9 L129 12.5 L130 15.7 L130.9 12.2 L131.8 6.9 L132.7 15.6 L133.7 11.3 L134.6 12.2 L135.5 8.9 L136.5 11.2 L137.4 10.8 L138.3 15 L139.3 7.7 L140.2 12.7 L141.1 8.6 L142 14.4 L143 7.2 L143.9 10 L144.8 10.8 L145.8 14.2 L146.7 7.9 L147.6 12.5 L148.6 9.9 L149.5 10.8 L150.4 13.2 L151.3 18.7 L152.3 13.6 L153.2 19 L154.1 10.6 L155.1 19.1 L156 13.2 L156.9 11.6 L157.9 18 L158.8 20.1 L159.7 10.4 L160.7 13.6 L161.6 19.4 L162.5 15 L163.4 14.2 L164.4 12 L165.3 12.7 L166.2 19.5 L167.2 23.8 L168.1 24.4 L169 19.3 L170 14.5 L170.9 18.2 L171.8 23.7 L172.7 24.7 L173.7 23 L174.6 19 L175.5 22.7 L176.5 22.6 L177.4 24.8 L178.3 21.3 L179.3 29.3 L180.2 29.3 L181.1 21.8 L182 23.7 L183 30.7 L183.9 24.7 L184.8 32.6 L185.8 28.5 L186.7 31.1 L187.6 31.9 L188.6 27.1 L189.5 28.6 L190.4 29 L191.3 34.4 L192.3 35.3 L193.2 29.9 L194.1 39 L195.1 34.8 L196 34.2" fill="none" stroke="#e0262e" stroke-width="1"/><path d="M26 39.3 L27.1 35.3 L28.2 35.3 L29.2 32.8 L30.3 39.7 L31.4 39.5 L32.5 39.8 L33.5 39.5 L34.6 34.6 L35.7 39.8 L36.8 37.2 L37.8 39.5 L38.9 39.1 L40 38.1" fill="none" stroke="#e0262e" stroke-width="1"/><text x="12" y="10.5" font-family="Liberation Sans, sans-serif" font-size="5.6" fill="#444">500</text><text x="12" y="19.4" font-family="Liberation Sans, sans-serif" font-size="5.6" fill="#444">400</text><text x="12" y="28.3" font-family="Liberation Sans, sans-serif" font-size="5.6" fill="#444">300</text><text x="12" y="37.2" font-family="Liberation Sans, sans-serif" font-size="5.6" fill="#444">200</text><text transform="translate(8 38) rotate(-90)" font-family="Liberation Sans, sans-serif" font-size="4.8" fill="#555">nt (1/min)</text></svg>
<svg style="left:988px;top:1019px" width="205" height="40" viewBox="0 0 205 40"><path d="M4 6h196M4 13h196M4 19.5h196M4 26h196M4 32.5h196M4 39h196" stroke="#cfcfcf" stroke-width=".6"/><path d="M49 6v33M103 6v33M158 6v33" stroke="#d8d8d8" stroke-width=".6"/><text x="52" y="11.3" font-family="Liberation Sans, sans-serif" font-size="4.2" fill="#555" font-weight="bold">Controls</text><text x="106" y="11.3" font-family="Liberation Sans, sans-serif" font-size="4.2" fill="#555" font-weight="bold">Acute insomnia</text><text x="162" y="11.3" font-family="Liberation Sans, sans-serif" font-size="4.2" fill="#555" font-style="italic">p</text><text x="7" y="17.8" font-family="Liberation Sans, sans-serif" font-size="4.2" fill="#555" font-style="italic">T</text><text x="52" y="17.8" font-family="Liberation Sans, sans-serif" font-size="4.2" fill="#555">1437 ± 20</text><text x="106" y="17.8" font-family="Liberation Sans, sans-serif" font-size="4.2" fill="#555">1435 ± 22</text><text x="174" y="17.8" font-family="Liberation Sans, sans-serif" font-size="4.2" fill="#555">0.733</text><text x="7" y="24.3" font-family="Liberation Sans, sans-serif" font-size="4.2" fill="#555" font-style="italic">M</text><text x="52" y="24.3" font-family="Liberation Sans, sans-serif" font-size="4.2" fill="#555">216 ± 56</text><text x="106" y="24.3" font-family="Liberation Sans, sans-serif" font-size="4.2" fill="#555">218 ± 63</text><text x="174" y="24.3" font-family="Liberation Sans, sans-serif" font-size="4.2" fill="#555">0.886</text><text x="7" y="30.8" font-family="Liberation Sans, sans-serif" font-size="4.2" fill="#555" font-style="italic">A</text><text x="52" y="30.8" font-family="Liberation Sans, sans-serif" font-size="4.2" fill="#555">178 ± 60</text><text x="106" y="30.8" font-family="Liberation Sans, sans-serif" font-size="4.2" fill="#555">179 ± 61</text><text x="174" y="30.8" font-family="Liberation Sans, sans-serif" font-size="4.2" fill="#555">0.979</text><text x="7" y="37.3" font-family="Liberation Sans, sans-serif" font-size="4.2" fill="#555" font-style="italic">mean(φ₀)</text><text x="52" y="37.3" font-family="Liberation Sans, sans-serif" font-size="4.2" fill="#555">232 ± 22</text><text x="106" y="37.3" font-family="Liberation Sans, sans-serif" font-size="4.2" fill="#555">253 ± 27</text><text x="174" y="37.3" font-family="Liberation Sans, sans-serif" font-size="4.2" fill="#555">0.017 (*)</text></svg>
<div style="left:1273.5px;top:960px;width:193.5px;height:97.8px;background:linear-gradient(180deg,#142f58 0%,#163a66 55%,#175279 82%,#1a5a84 100%)"></div>
<span class="t ui" style="left:1289px;top:992.8px;height:24px;line-height:24px;font-size:18.5px;color:#dfe6ef;-webkit-text-stroke:.45px;letter-spacing:-0.05px">January 8, 2021</span>
<div style="left:275px;top:1058.5px;width:1211.5px;height:19px;background:#fafafa"></div>
<div style="left:278px;top:1063px;width:1156px;height:9.5px;background:#c2c2c2;border-radius:5px"></div>
<div style="left:1486px;top:58px;width:1px;height:1020px;background:#dcdcdc"></div>
<div style="left:1487px;top:91px;width:349px;height:1px;background:#dadada"></div>
<svg style="left:1540px;top:66px;" width="11" height="16" viewBox="0 0 11 16"><rect x="3.7" y=".500" width="3.2" height="3.2" fill="#1a9fd8"/><path d="M1.5 6.2h5.4v7.5M.800 14.3h9.6" fill="none" stroke="#1a9fd8" stroke-width="2.5"/></svg>
<svg style="left:1575.5px;top:67px;" width="16" height="16" viewBox="0 0 16 16"><path d="M3.5 1.2h9a2.3 2.3 0 0 1 2.3 2.3v5a2.3 2.3 0 0 1-2.3 2.3H11l.5 3.7-4-3.7H3.5A2.3 2.3 0 0 1 1.2 8.5v-5A2.3 2.3 0 0 1 3.5 1.2z" fill="#dedede" stroke="#707070" stroke-width="1.9" stroke-linejoin="round"/></svg>
<svg style="left:1612.5px;top:68px;" width="19" height="13" viewBox="0 0 19 13"><rect x=".500" y="0.5" width="2.3" height="2.3" fill="#707070"/><rect x="5.5" y="0.5" width="13" height="2.3" fill="#707070"/><rect x=".500" y="5.4" width="2.3" height="2.3" fill="#707070"/><rect x="5.5" y="5.4" width="9" height="2.3" fill="#707070"/><rect x=".500" y="10.3" width="2.3" height="2.3" fill="#707070"/><rect x="5.5" y="10.3" width="10.5" height="2.3" fill="#707070"/></svg>
<svg style="left:1654px;top:67px;" width="13" height="15" viewBox="0 0 13 15"><path d="M1.2 1.2h6.3l4.3 4.3v8.3H1.2z" fill="#e2e2e2" stroke="#707070" stroke-width="2.1" stroke-linejoin="round"/><path d="M7 1.5v4.5h4.5" fill="none" stroke="#707070" stroke-width="1.4"/></svg>
<svg style="left:1690px;top:66.5px;" width="17" height="15" viewBox="0 0 17 15"><circle cx="6.5" cy="6.5" r="6" fill="#c9c9c9"/><circle cx="10.5" cy="8.5" r="6" fill="#d6d6d6"/><circle cx="8.3" cy="7.3" r="4.3" fill="#7a7a7a"/></svg>
<svg style="left:1728px;top:68px;" width="19" height="13" viewBox="0 0 19 13"><rect x="0" y=".300" width="18.5" height="1.9" fill="#707070"/><rect x="0" y="5.5" width="18.5" height="1.9" fill="#a8a8a8"/><rect x="0" y="5.5" width="10" height="1.9" fill="#707070"/><rect x="0" y="10.7" width="18.5" height="1.9" fill="#a8a8a8"/><rect x="0" y="10.7" width="7" height="1.9" fill="#707070"/></svg>
<svg style="left:1769px;top:66.5px;" width="17" height="17" viewBox="0 0 17 17"><circle cx="6.5" cy="6.5" r="4.9" fill="none" stroke="#707070" stroke-width="2.1"/><path d="M10.3 10.3L15.5 15.5" stroke="#707070" stroke-width="2.6" stroke-linecap="round"/></svg>
<div style="left:1553px;top:107.3px;width:67.7px;height:17.5px;background:#1ea7e4;border-radius:5px 0 0 5px"></div>
<div style="left:1622px;top:107.3px;width:62px;height:17.5px;background:#b1b1b1"></div>
<div style="left:1685.5px;top:107.3px;width:83.3px;height:17.5px;background:#b1b1b1;border-radius:0 5px 5px 0"></div>
<span class="t ui" style="left:1563.3px;top:107px;height:18px;line-height:18px;color:#fff;font-size:13.8px;-webkit-text-stroke:.35px #fff;letter-spacing:0.51px">Generic</span>
<span class="t ui" style="left:1628.3px;top:107px;height:18px;line-height:18px;color:#fff;font-size:13.8px;-webkit-text-stroke:.35px #fff;letter-spacing:0.53px">Custom</span>
<span class="t ui" style="left:1692px;top:107px;height:18px;line-height:18px;color:#fff;font-size:13.8px;-webkit-text-stroke:.35px #fff;letter-spacing:0.53px">Properties</span>
<svg style="left:1537px;top:140px;" width="40" height="40" viewBox="0 0 40 40"><rect x="0" y="0" width="40" height="40" fill="#fbfbfb"/><rect x="0" y="0" width="40" height="3.5" fill="#23263a"/><rect x="1" y="6" width="9" height="1.5" fill="#4a4f78"/><rect x="20" y="6" width="12" height="1" fill="#d0d0d0"/><rect x="1" y="10" width="30" height="1" fill="#dcdcdc"/><rect x="1" y="13" width="28" height="2.5" fill="#d4d4d4"/><rect x="33" y="10" width="6" height="8" fill="#e6e6e6"/><rect x="1" y="19" width="38" height="3" fill="#55554a"/><rect x="1" y="19" width="6" height="3" fill="#d8d838"/><rect x="30" y="19" width="2.5" height="3" fill="#e9e9e9"/><rect x="8" y="25" width="22" height="13" fill="#dedede"/><rect x="1" y="25" width="5" height="1" fill="#dedede"/><rect x="33" y="24" width="5" height="9" fill="#e4e4e4"/><rect x="32.5" y="35" width="6" height="4.5" fill="#1c6b7c"/></svg>
<span class="t ui" style="left:1586.3px;top:146.3px;height:24px;line-height:24px;font-size:16.5px;font-weight:bold;color:#222;letter-spacing:0.23px">Multiscale adaptive analys...</span>
<span class="t ui" style="left:1542px;top:192.5px;height:18px;line-height:18px;color:#8c8c8c;font-size:13.3px;letter-spacing:0.64px">Name</span>
<div style="left:1587px;top:189.5px;width:230px;height:60px;border:1px solid #f0f0f0;background:#fff"></div>
<span class="t ui" style="left:1592.5px;top:192.5px;height:18px;line-height:18px;font-size:13.3px;color:#2a2a2a;letter-spacing:0.67px">Multiscale adaptive analysis of</span>
<span class="t ui" style="left:1592.5px;top:209.5px;height:18px;line-height:18px;font-size:13.3px;color:#2a2a2a;letter-spacing:0.71px">circadian rhythms and intradaily</span>
<div style="left:1587px;top:1004.5px;width:15px;height:15px;border:1px solid #dddddd;border-radius:3.5px;background:#f6f6f6"></div>
<span class="t ui" style="left:1607.5px;top:1002.5px;height:18px;line-height:18px;color:#b4b4b4;font-size:13.3px;letter-spacing:.5px">Tagging</span>
<div style="left:1587px;top:1028.5px;width:15px;height:15px;border:1px solid #cfcfcf;border-radius:3.5px;background:#fff"></div>
<span class="t ui" style="left:1607.5px;top:1027px;height:18px;line-height:18px;color:#2a2a2a;font-size:13.3px;letter-spacing:.5px">Wiki Linking</span>
</div></div>
<div id="front"><div id="frontin"><div style="left:-729px;top:-224px;width:1920px;height:1097px">
<div style="left:729px;top:224px;width:1180px;height:64.5px;background:#eeeeee"></div>
<div style="left:729px;top:288.3px;width:1180px;height:1px;background:#e2e2e2"></div>
<div style="left:753.8px;top:248.6px;width:14.4px;height:14.4px;border-radius:50%;background:#f5544d;box-shadow:inset 0 0 0 .5px #dd4a42"></div>
<div style="left:778.8px;top:248.6px;width:14.4px;height:14.4px;border-radius:50%;background:#fab62f;box-shadow:inset 0 0 0 .5px #dc9d28"></div>
<div style="left:803.8px;top:248.6px;width:14.4px;height:14.4px;border-radius:50%;background:#29c13f;box-shadow:inset 0 0 0 .5px #23a735"></div>
<span class="t ui" style="left:842.5px;top:237px;height:22px;line-height:22px;font-size:16.5px;font-weight:bold;color:#3a3a3a;letter-spacing:0.4px">MLSS2020_Fairness</span>
<span class="t ui" style="left:842.5px;top:257.5px;height:18px;line-height:18px;font-size:13.5px;color:#7c7c7c;letter-spacing:0.33px">25.4 x 14.3 cm, 114 pages,…</span>
<svg style="left:1050.5px;top:243.5px;" width="21" height="23" viewBox="0 0 21 23"><rect x="1.5" y="1" width="18" height="13.5" rx="2.5" fill="none" stroke="#c2c2c2" stroke-width="1.5"/><path d="M1.5 17v1.5a2.5 2.5 0 0 0 2.5 2.5h13a2.5 2.5 0 0 0 2.5-2.5V17" fill="none" stroke="#c2c2c2" stroke-width="1.5"/><path d="M8.5 17.7h4.5" stroke="#c2c2c2" stroke-width="1.4" stroke-dasharray="1 .700"/></svg>
<svg style="left:1130.5px;top:245px;" width="20" height="20" viewBox="0 0 20 20"><rect x="1.9" y="1.9" width="16.2" height="16.2" rx="3.5" fill="none" stroke="#666" stroke-width="2" stroke-linejoin="round" stroke-linecap="round"/><path d="M7.3 12.7l5.6-5.6M8.3 6.9h4.8v4.8" fill="none" stroke="#666" stroke-width="1.8" stroke-linejoin="round" stroke-linecap="round"/></svg>
<svg style="left:1179.7px;top:242px;" width="22" height="25" viewBox="0 0 22 25"><path d="M7.5 8.7H4.8a2 2 0 0 0-2 2v11a2 2 0 0 0 2 2h12.4a2 2 0 0 0 2-2v-11a2 2 0 0 0-2-2h-2.7" fill="none" stroke="#666" stroke-width="2" stroke-linejoin="round" stroke-linecap="round"/><path d="M11 15V2M7.5 5L11 1.5 14.5 5" fill="none" stroke="#666" stroke-width="1.9" stroke-linejoin="round" stroke-linecap="round"/></svg>
<svg style="left:1210.1px;top:252.85px;" width="9.8" height="6.3" viewBox="0 0 9.8 6.3"><path d="M1 1 L4.9 5.3 L8.8 1" fill="none" stroke="#666" stroke-width="2.1" stroke-linecap="round" stroke-linejoin="round"/></svg>
<svg style="left:1282.5px;top:244px;" width="22" height="22" viewBox="0 0 22 22"><circle cx="9" cy="9" r="7.6" fill="none" stroke="#666" stroke-width="2" stroke-linejoin="round" stroke-linecap="round"/><path d="M14.8 14.8L19.8 19.8" fill="none" stroke="#666" stroke-width="2.8" stroke-linecap="round"/><path d="M5.8 9h6.4" fill="none" stroke="#666" stroke-width="1.8" stroke-linejoin="round" stroke-linecap="round"/></svg>
<div style="left:1316.2px;top:245px;width:1px;height:22px;background:#e0e0e0"></div>
<svg style="left:1329.5px;top:244px;" width="22" height="22" viewBox="0 0 22 22"><circle cx="9" cy="9" r="7.6" fill="none" stroke="#666" stroke-width="2" stroke-linejoin="round" stroke-linecap="round"/><path d="M14.8 14.8L19.8 19.8" fill="none" stroke="#666" stroke-width="2.8" stroke-linecap="round"/><path d="M7.7 7.2L9.5 6v6.3" fill="none" stroke="#666" stroke-width="1.3" stroke-linejoin="round" stroke-linecap="round"/></svg>
<div style="left:1363.2px;top:245px;width:1px;height:22px;background:#e0e0e0"></div>
<svg style="left:1377px;top:244px;" width="22" height="22" viewBox="0 0 22 22"><circle cx="9" cy="9" r="7.6" fill="none" stroke="#666" stroke-width="2" stroke-linejoin="round" stroke-linecap="round"/><path d="M14.8 14.8L19.8 19.8" fill="none" stroke="#666" stroke-width="2.8" stroke-linecap="round"/><path d="M5.8 9h6.4M9 5.8v6.4" fill="none" stroke="#666" stroke-width="1.8" stroke-linejoin="round" stroke-linecap="round"/></svg>
<svg style="left:1430.3px;top:244.3px;" width="22" height="22" viewBox="0 0 22 22"><rect x="5.9" y="6.1" width="9.9" height="9.5" rx="1.8" fill="none" stroke="#666" stroke-width="2" stroke-linejoin="round" stroke-linecap="round"/><path d="M1.2 1.2h4.7l-4.7 4.7zM20.8 20.8h-4.7l4.7-4.7z" fill="#666"/></svg>
<svg style="left:1478px;top:244px;" width="28" height="22" viewBox="0 0 28 22"><rect x="8.5" y="2" width="11" height="17.8" rx="2" fill="none" stroke="#666" stroke-width="2" stroke-linejoin="round" stroke-linecap="round"/><path d="M1 11l4-3.8v7.6zM27 11l-4-3.8v7.6z" fill="#666"/></svg>
<svg style="left:1531.2px;top:244.1px;" width="24" height="22" viewBox="0 0 24 22"><path d="M8 2.4h14.2V13M15 19.6H1.7V9" fill="none" stroke="#666" stroke-width="2" stroke-linejoin="miter" stroke-linecap="butt"/><path d="M.700 1.4h4.9l-4.9 4.9zM23.2 20.6h-4.9l4.9-4.9z" fill="#666"/></svg>
<svg style="left:1615px;top:244.5px;" width="21" height="22" viewBox="0 0 21 22"><path d="M2 21V1.5M2 2.5h17v10.5H2" fill="none" stroke="#666" stroke-width="1.7" stroke-linejoin="round" stroke-linecap="round"/></svg>
<div style="left:1647.2px;top:245px;width:1px;height:22px;background:#e0e0e0"></div>
<svg style="left:1658.5px;top:244.5px;" width="22" height="22" viewBox="0 0 22 22"><circle cx="11" cy="11" r="9.7" fill="none" stroke="#666" stroke-width="1.8" stroke-linejoin="round" stroke-linecap="round"/><circle cx="11" cy="11" r="5.3" fill="none" stroke="#666" stroke-width="1.8" stroke-linejoin="round" stroke-linecap="round"/></svg>
<div style="left:1691.5px;top:245px;width:1px;height:22px;background:#e0e0e0"></div>
<svg style="left:1706.5px;top:244.5px;" width="16" height="21" viewBox="0 0 16 21"><rect x="1.5" y="9.5" width="13" height="10.5" rx="1" fill="none" stroke="#666" stroke-width="1.7" stroke-linejoin="round" stroke-linecap="round"/><path d="M4.2 9.5V6a3.8 3.8 0 0 1 7.6 0v3.5" fill="none" stroke="#666" stroke-width="1.8" stroke-linejoin="round" stroke-linecap="round"/></svg>
<svg style="left:1759px;top:250.5px;" width="22" height="11" viewBox="0 0 22 11"><rect x="1" y="1" width="20" height="9" rx="4.5" fill="none" stroke="#666" stroke-width="1.7" stroke-linejoin="round" stroke-linecap="round"/></svg>
<svg style="left:1791.6px;top:253.35px;" width="9.8" height="6.3" viewBox="0 0 9.8 6.3"><path d="M1 1 L4.9 5.3 L8.8 1" fill="none" stroke="#666" stroke-width="2.1" stroke-linecap="round" stroke-linejoin="round"/></svg>
<svg style="left:1875px;top:249.5px;" width="16" height="14" viewBox="0 0 16 14"><path d="M1.5 1.5L7 7l-5.5 5.5M8.5 1.5L14 7l-5.5 5.5" fill="none" stroke="#666" stroke-width="1.5" stroke-linejoin="round" stroke-linecap="round"/></svg>
<div style="left:729px;top:289.3px;width:1180px;height:33px;background:#fff"></div>
<div style="left:729px;top:322px;width:1180px;height:1px;background:#e6e6e6"></div>
<svg style="left:750px;top:295.5px;" width="12" height="18" viewBox="0 0 12 18"><path d="M9.8 1.5L2.2 9l7.6 7.5" fill="none" stroke="#828282" stroke-width="2" stroke-linecap="round" stroke-linejoin="round"/></svg>
<svg style="left:776.5px;top:295.5px;" width="12" height="18" viewBox="0 0 12 18"><path d="M2.2 1.5L9.8 9l-7.6 7.5" fill="none" stroke="#828282" stroke-width="2" stroke-linecap="round" stroke-linejoin="round"/></svg>
<div style="left:808.5px;top:292px;width:1px;height:27px;background:#dedede"></div>
<span class="t ui" style="left:830px;top:298.5px;height:14px;line-height:14px;font-size:11px;color:#2c2c2c;text-shadow:0 0 .3px #2c2c2c;letter-spacing:0.15px">1/114</span>
<div style="left:877px;top:292px;width:1px;height:27px;background:#dedede"></div>
<svg style="left:896px;top:296.5px;" width="20" height="17" viewBox="0 0 20 17"><rect x="1" y="1" width="13.5" height="15" fill="none" stroke="#666" stroke-width="1.3" stroke-dasharray="3.2 2"/><path d="M4.3 5.2h7M7.8 5.2v7.3" fill="none" stroke="#666" stroke-width="2.2"/><path d="M17 1.5v14M15 .800c1.2 0 2 .500 2 1.5 0-1 .800-1.5 2-1.5M15 16.2c1.2 0 2-.500 2-1.5 0 1 .800 1.5 2 1.5" fill="none" stroke="#666" stroke-width="1.1"/></svg>
<svg style="left:933px;top:296.5px;" width="18" height="17" viewBox="0 0 18 17"><rect x="1" y="1" width="16" height="15" fill="none" stroke="#666" stroke-width="1.4" stroke-dasharray="4 2.7"/></svg>
<svg style="left:970.5px;top:297px;" width="16" height="16" viewBox="0 0 16 16"><path d="M8 2v12M2 8h12" fill="none" stroke="#666" stroke-width="1.3" stroke-linejoin="round" stroke-linecap="round"/><path d="M8 .300L10.2 3.2H5.8zM8 15.7l2.2-2.9H5.8zM.300 8l2.9-2.2v4.4zM15.7 8l-2.9-2.2v4.4z" fill="#666"/></svg>
<div style="left:1007px;top:292px;width:1px;height:27px;background:#dedede"></div>
<div style="left:1024px;top:299px;width:19px;height:11.3px;background:#7cc6e6"></div>
<span class="t ui" style="left:1023.5px;width:20px;text-align:center;top:297.2px;height:16px;line-height:16px;font-size:15.5px;letter-spacing:0;color:#4793b6;-webkit-text-stroke:0">A</span>
<svg style="left:1043px;top:303px;" width="5" height="4" viewBox="0 0 5 4"><path d="M0 0h5L2.5 3.5z" fill="#256f8c"/></svg>
<span class="t ui" style="left:1062px;width:20px;text-align:center;top:296.3px;height:16px;line-height:16px;font-size:15px;letter-spacing:0;color:#666;-webkit-text-stroke:0">U</span>
<div style="left:1063.5px;top:313.6px;width:16.5px;height:1px;background:#7a7a7a"></div>
<span class="t ui" style="left:1097.5px;width:20px;text-align:center;top:297.3px;height:16px;line-height:16px;font-size:15px;letter-spacing:0;color:#666;-webkit-text-stroke:0">S</span>
<div style="left:1098px;top:304.3px;width:19.5px;height:1px;background:#707070"></div>
<div style="left:1136.5px;top:292px;width:1px;height:27px;background:#dedede"></div>
<svg style="left:1157px;top:296.5px;" width="17" height="17" viewBox="0 0 17 17"><rect x="2.5" y="2.5" width="12" height="12" fill="none" stroke="#666" stroke-width="1.4"/><rect x="1.2" y="1.2" width="2.6" height="2.6" fill="#666"/><rect x="1.2" y="13.2" width="2.6" height="2.6" fill="#666"/><rect x="13.2" y="1.2" width="2.6" height="2.6" fill="#666"/><rect x="13.2" y="13.2" width="2.6" height="2.6" fill="#666"/></svg>
<svg style="left:1192.5px;top:296px;" width="18" height="18" viewBox="0 0 18 18"><circle cx="9" cy="9" r="7.3" fill="none" stroke="#666" stroke-width="1.4"/><circle cx="9" cy="1.7" r="1.3" fill="#666"/><circle cx="9" cy="16.3" r="1.3" fill="#666"/><circle cx="1.7" cy="9" r="1.3" fill="#666"/><circle cx="16.3" cy="9" r="1.3" fill="#666"/></svg>
<svg style="left:1227.5px;top:298px;" width="20" height="14" viewBox="0 0 20 14"><path d="M.500 1.5h4M7.5 1.5h4M14.5 1.5h4" fill="none" stroke="#666" stroke-width="1.3" stroke-linejoin="round" stroke-linecap="round"/><path d="M.500 7h18.5M.500 12h16" fill="none" stroke="#666" stroke-width="1.3" stroke-linejoin="round" stroke-linecap="round"/><path d="M16 9.8l3.5 2.2-3.5 2.2z" fill="#666"/></svg>
<svg style="left:1265.5px;top:295.8px;" width="17" height="19" viewBox="0 0 17 19"><path d="M2.5 1.2h12a1.3 1.3 0 0 1 1.3 1.3v9.5a1.3 1.3 0 0 1-1.3 1.3h-2.3v4l-4-4H2.5a1.3 1.3 0 0 1-1.3-1.3V2.5a1.3 1.3 0 0 1 1.3-1.3z" fill="none" stroke="#666" stroke-width="1.3" stroke-linejoin="round" stroke-linecap="round"/><path d="M4.3 4.7h8.4M4.3 7.3h8.4M4.3 9.9h5" fill="none" stroke="#666" stroke-width="1.1" stroke-linejoin="round" stroke-linecap="round"/></svg>
<svg style="left:1300.5px;top:297.5px;" width="19" height="15" viewBox="0 0 19 15"><rect x="1.2" y="1.2" width="16.6" height="12.6" fill="none" stroke="#666" stroke-width="1.3" stroke-linejoin="round" stroke-linecap="round"/><path d="M6.2 4.7h6.6M9.5 4.7v6" fill="none" stroke="#666" stroke-width="2"/><path d="M0 7.5h2.5M16.5 7.5h2.5" stroke="#666" stroke-width="1.5"/></svg>
<svg style="left:1339px;top:297px;" width="16" height="16" viewBox="0 0 16 16"><path d="M6.8 9.2a3.2 3.2 0 0 1 0-4.5l2.5-2.5a3.2 3.2 0 0 1 4.5 4.5l-1.3 1.3" fill="none" stroke="#666" stroke-width="1.3" stroke-linejoin="round" stroke-linecap="round"/><path d="M9.2 6.8a3.2 3.2 0 0 1 0 4.5l-2.5 2.5a3.2 3.2 0 0 1-4.5-4.5l1.3-1.3" fill="none" stroke="#666" stroke-width="1.3" stroke-linejoin="round" stroke-linecap="round"/></svg>
<div style="left:1375px;top:292px;width:1px;height:27px;background:#dedede"></div>
<svg style="left:1395.5px;top:296.5px;" width="18" height="17" viewBox="0 0 18 17"><rect x="1.5" y="9" width="7" height="7" fill="none" stroke="#666" stroke-width="1.3" stroke-linejoin="round" stroke-linecap="round"/><path d="M6 3.5c5.5 0 9.5 3 9.5 8.5" fill="none" stroke="#666" stroke-width="1.3" stroke-linejoin="round" stroke-linecap="round"/><path d="M7 .500L3.3 3.5 7 6.5z" fill="#666"/></svg>
<svg style="left:1430px;top:296.5px;" width="18" height="17" viewBox="0 0 18 17"><rect x="9.5" y="9" width="7" height="7" fill="none" stroke="#666" stroke-width="1.3" stroke-linejoin="round" stroke-linecap="round"/><path d="M12 3.5C6.5 3.5 2.5 6.5 2.5 12" fill="none" stroke="#666" stroke-width="1.3" stroke-linejoin="round" stroke-linecap="round"/><path d="M11 .500l3.7 3-3.7 3z" fill="#666"/></svg>
<svg style="left:1465.3px;top:297.3px;" width="20" height="16" viewBox="0 0 20 16"><rect x="6.5" y="8.5" width="7" height="7" fill="none" stroke="#666" stroke-width="1.3" stroke-linejoin="round" stroke-linecap="round"/><path d="M2 13.5V9.5a8 8 0 0 1 16 0v1" fill="none" stroke="#666" stroke-width="1.3" stroke-linejoin="round" stroke-linecap="round"/><path d="M15.5 9.5h5L18 13z" fill="#666"/></svg>
<div style="left:1504.5px;top:292px;width:1px;height:27px;background:#dedede"></div>
<svg style="left:1525.5px;top:296px;" width="18" height="19" viewBox="0 0 18 19"><path d="M8 14H2V1.2h6.3l3.7 3.7V9.5" fill="none" stroke="#666" stroke-width="1.3" stroke-linejoin="round" stroke-linecap="round"/><path d="M8 1.5v3.7h3.7" fill="none" stroke="#666" stroke-width="1" stroke-linejoin="round" stroke-linecap="round"/><path d="M12.3 11v7.5M8.6 14.8h7.5" fill="none" stroke="#666" stroke-width="1.3" stroke-linejoin="round" stroke-linecap="round"/></svg>
<svg style="left:1561.5px;top:296px;" width="18" height="19" viewBox="0 0 18 19"><path d="M8 14H2V1.2h6.3l3.7 3.7V10" fill="none" stroke="#666" stroke-width="1.3" stroke-linejoin="round" stroke-linecap="round"/><path d="M8 1.5v3.7h3.7" fill="none" stroke="#666" stroke-width="1" stroke-linejoin="round" stroke-linecap="round"/><path d="M9.8 12.3l5.4 5.4M15.2 12.3l-5.4 5.4" fill="none" stroke="#666" stroke-width="1.3" stroke-linejoin="round" stroke-linecap="round"/></svg>
<svg style="left:1598.5px;top:295.5px;" width="15" height="19" viewBox="0 0 15 19"><rect x="1" y="1" width="4" height="4" fill="none" stroke="#666" stroke-width="1.3"/><rect x="1" y="7.5" width="4" height="4" fill="none" stroke="#666" stroke-width="1.3"/><rect x="1" y="14" width="4" height="4" fill="none" stroke="#666" stroke-width="1.3"/><path d="M11 3v13" fill="none" stroke="#666" stroke-width="1.3" stroke-linejoin="round" stroke-linecap="round"/><path d="M11 .300l2.6 3.4H8.4zM11 18.7l2.6-3.4H8.4z" fill="#666"/></svg>
<div style="left:1792px;top:292px;width:1px;height:27px;background:#dedede"></div>
<span class="t ui" style="left:1804.4px;top:298.5px;height:14px;line-height:14px;font-size:11.2px;color:#8a8a8a;letter-spacing:1.1px">4598 w</span>
<div style="left:1857.8px;top:292px;width:1px;height:27px;background:#dedede"></div>
<svg style="left:1877px;top:297px;" width="19" height="17" viewBox="0 0 19 17"><path d="M1 5.5L2.8 1l1.8 4.5V15a1 1 0 0 1-1 1H2a1 1 0 0 1-1-1z" fill="none" stroke="#1a9fd8" stroke-width="1.2"/><path d="M1 12.5h3.6" stroke="#1a9fd8" stroke-width="1"/><rect x="7" y="1.5" width="4.8" height="14.5" fill="none" stroke="#1a9fd8" stroke-width="1.2"/><path d="M7 4.5h2M7 7.5h2.5M7 10.5h2M7 13.5h2.5" stroke="#1a9fd8" stroke-width=".900"/><path d="M14.3 6.5C14.3 4 15.5 2 16.2 .800 17 2 18.2 4 18.2 6.5V15a1 1 0 0 1-1 1h-1.9a1 1 0 0 1-1-1z" fill="none" stroke="#1a9fd8" stroke-width="1.2"/><path d="M14.3 7h3.9" stroke="#1a9fd8" stroke-width="1"/></svg>
<div style="left:729px;top:323px;width:1180px;height:682px;background:#7b7b7b"></div>
<div style="left:735px;top:323px;width:1154.5px;height:397.5px;background:#eeeeee"></div>
<div style="left:735px;top:720.5px;width:1154.5px;height:258px;background:#fff"></div>
<div style="left:735px;top:977.8px;width:1154.5px;height:1.5px;background:linear-gradient(#a9a9a9,#7b7b7b)"></div>
<div style="left:735px;top:993px;width:1173px;height:12px;background:#fff;border-bottom-left-radius:7px"></div>
<div style="left:1889.5px;top:323px;width:19px;height:670.5px;background:#fafafa;border-left:1px solid #e8e8e8"></div>
<div style="left:1894px;top:327px;width:9.8px;height:22.3px;background:#bebebe;border-radius:5px"></div>
<svg style="left:0;top:0" width="1920" height="1097" viewBox="0 0 1920 1097"><path d="M1295 720.5h45l-22.5 24.5z" fill="#eeeeee"/><rect x="1345.7" y="568.7" width="366.1" height="98.8" fill="#f0f00a"/><text x="899" y="567.5" font-family="Liberation Sans, sans-serif" font-size="70.4" font-weight="bold" textLength="833.8" lengthAdjust="spacingAndGlyphs" fill="#434343" stroke="#434343" stroke-width="2.4" >Fairness and Machine Learning:</text><clipPath id="hl"><rect x="1345.7" y="568.7" width="365.6" height="98.3"/></clipPath><g clip-path="url(#hl)"><text x="899" y="567.5" font-family="Liberation Sans, sans-serif" font-size="70.4" font-weight="bold" textLength="833.8" lengthAdjust="spacingAndGlyphs" fill="#46460a" stroke="#46460a" stroke-width="2.4" >Fairness and Machine Learning:</text></g><text x="921.5" y="646" font-family="Liberation Sans, sans-serif" font-size="70" font-weight="bold" textLength="408.3" lengthAdjust="spacingAndGlyphs" fill="#434343" stroke="#434343" stroke-width="2.4" >Limitations and</text><text x="1348.2" y="646" font-family="Liberation Sans, sans-serif" font-size="70" font-weight="bold" textLength="362" lengthAdjust="spacingAndGlyphs" fill="#46460a" stroke="#46460a" stroke-width="2.4" >Opportunities</text><text x="1182.2" y="826.7" font-family="Liberation Sans, sans-serif" font-size="62.4" font-weight="normal" textLength="265" lengthAdjust="spacingAndGlyphs" fill="#454545" stroke="#454545" stroke-width="2" >Moritz Hardt</text><text x="1207.3" y="888.1" font-family="Liberation Sans, sans-serif" font-size="52" font-weight="normal" textLength="215.5" lengthAdjust="spacingAndGlyphs" fill="#9b9b9b" stroke="#9b9b9b" stroke-width="1.6" >UC Berkeley</text></svg>
</div></div></div>
</body></html>
